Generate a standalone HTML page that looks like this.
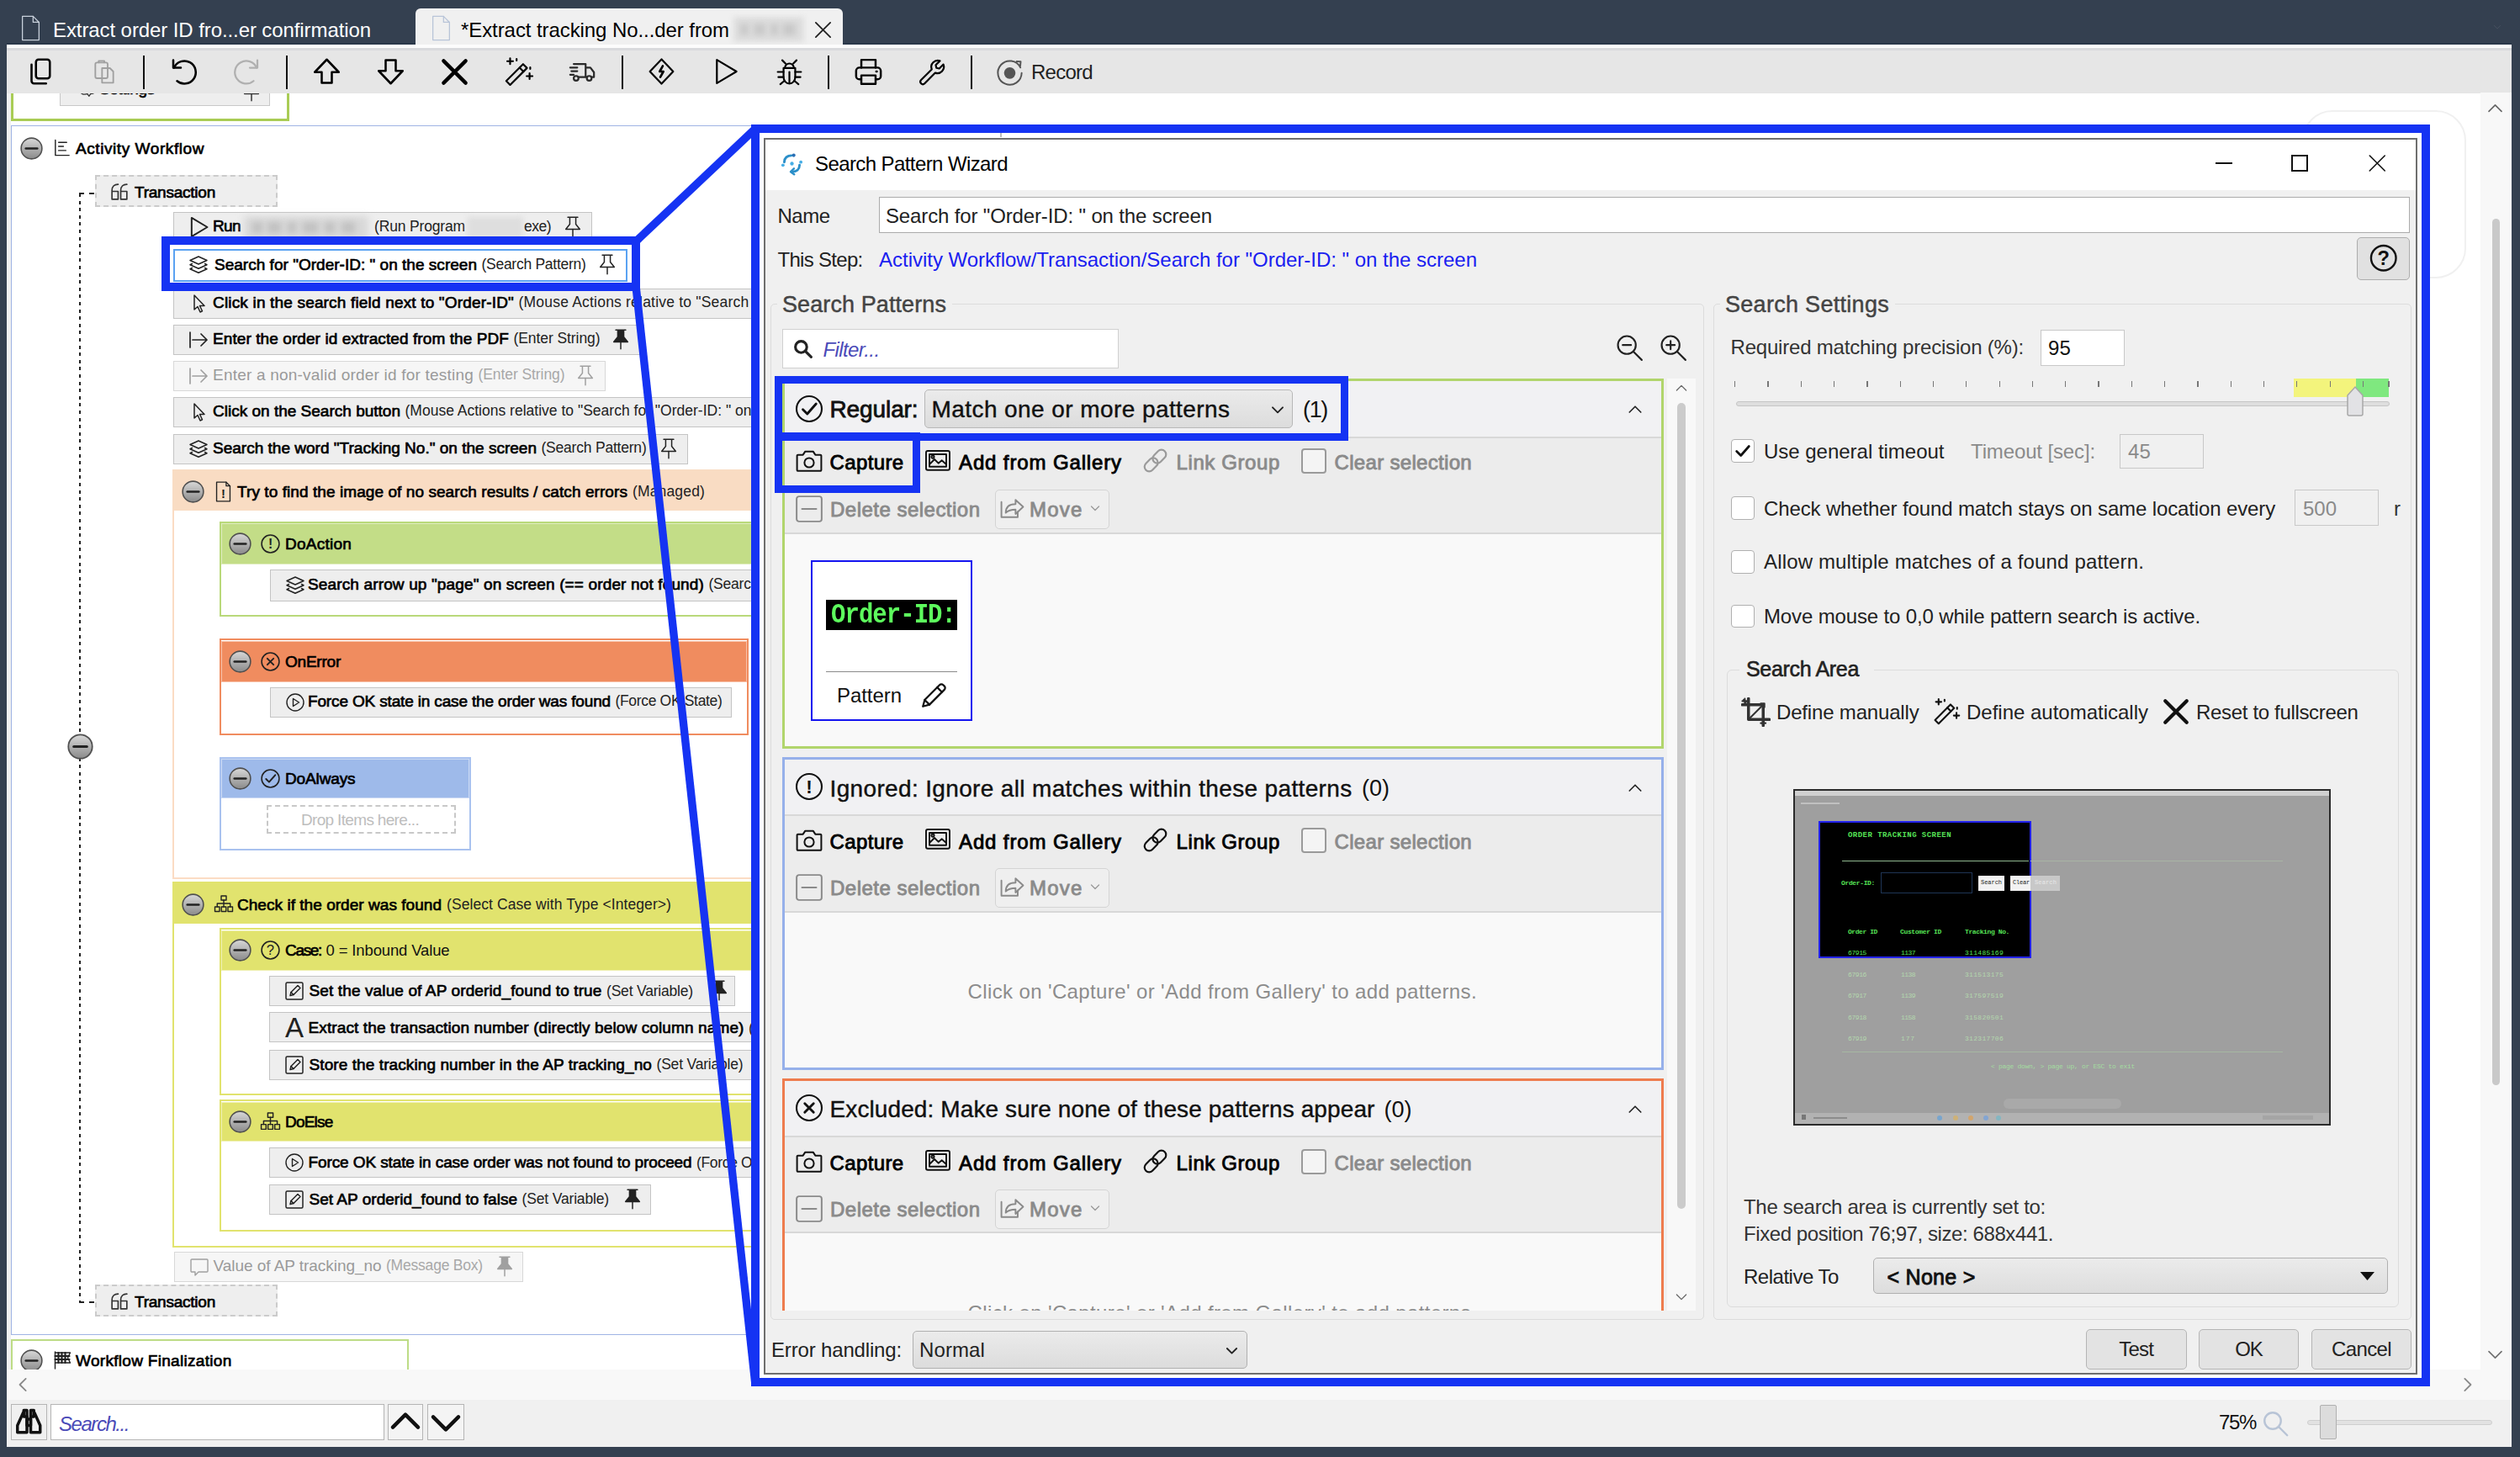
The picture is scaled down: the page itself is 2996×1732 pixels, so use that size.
<!DOCTYPE html>
<html lang="en"><head><meta charset="utf-8"><title>Search Pattern Wizard</title>
<style>
html,body{margin:0;padding:0;background:#344050;}
body{width:2996px;height:1732px;position:relative;overflow:hidden;font-family:"Liberation Sans",sans-serif;}
.b{position:absolute;box-sizing:border-box;display:block;}
.t{position:absolute;white-space:pre;line-height:1;display:block;}
</style></head>
<body>
<div class="b " style="left:0px;top:0px;width:2996px;height:1732px;background:#344050;"></div>
<div class="b " style="left:8px;top:53px;width:2978px;height:1667px;background:#f0f0f0;"></div>
<svg class="b" style="left:24px;top:18px;color:#c9d1dc;" width="25" height="31" viewBox="4 1 16 22" fill="none" stroke="currentColor" stroke-width="0.9" stroke-linecap="round" stroke-linejoin="round"><path d="M5 2h9l5 5v15H5z"/><path d="M14 2v5h5"/></svg>
<span class="t" style="letter-spacing:-0.091px;left:63px;top:23.5px;font-size:24px;color:#fff;">Extract order ID fro...er confirmation</span>
<div class="b " style="left:494px;top:10px;width:508px;height:44px;background:#f0f0f0;border-radius:6px 6px 0 0;"></div>
<svg class="b" style="left:512px;top:18px;color:#b8c4d8;" width="25" height="31" viewBox="4 1 16 22" fill="none" stroke="currentColor" stroke-width="0.9" stroke-linecap="round" stroke-linejoin="round"><path d="M5 2h9l5 5v15H5z"/><path d="M14 2v5h5"/></svg>
<span class="t" style="letter-spacing:-0.079px;left:548px;top:23.5px;font-size:24px;color:#000;">*Extract tracking No...der from</span>
<div class="b " style="left:872px;top:20px;width:84px;height:30px;background:#dedede;filter:blur(3px);"></div>
<div class="b " style="left:880px;top:28px;width:10px;height:14px;background:#c8c8c8;filter:blur(3.500px);"></div>
<div class="b " style="left:896px;top:28px;width:14px;height:14px;background:#c8c8c8;filter:blur(3.500px);"></div>
<div class="b " style="left:916px;top:28px;width:9px;height:14px;background:#c8c8c8;filter:blur(3.500px);"></div>
<div class="b " style="left:930px;top:28px;width:16px;height:14px;background:#c8c8c8;filter:blur(3.500px);"></div>
<svg class="b" style="left:967px;top:24px;color:#222;" width="23" height="23" viewBox="0 0 24 24" fill="none" stroke="currentColor" stroke-width="1.9" stroke-linecap="round" stroke-linejoin="round"><path d="M3 3l18 18M21 3L3 21"/></svg>
<svg class="b" style="left:2962px;top:27px;color:#46505f;" width="14" height="10" viewBox="0 0 24 24" fill="none" stroke="currentColor" stroke-width="2.4" stroke-linecap="round" stroke-linejoin="round"><path d="M3 8l9 9 9-9"/></svg>
<div class="b " style="left:8px;top:50.8px;width:486px;height:2.2px;background:#2a3749;"></div>
<div class="b " style="left:1002px;top:50.8px;width:1984px;height:2.2px;background:#2a3749;"></div>
<div class="b " style="left:8px;top:53px;width:2978px;height:4px;background:#fcfcfc;"></div>
<div class="b " style="left:8px;top:57px;width:2978px;height:2.5px;background:#d9dadd;"></div>
<div class="b " style="left:8px;top:59.5px;width:2978px;height:51.5px;background:#e6e6e6;"></div>
<svg class="b" style="left:30px;top:66px;color:#000;" width="36" height="38" viewBox="0 0 24 24" fill="none" stroke="currentColor" stroke-width="1.7" stroke-linecap="round" stroke-linejoin="round"><rect x="8.5" y="2.5" width="11" height="15" rx="2"/><path d="M5 6.5v13a2 2 0 0 0 2 2h9.5"/></svg>
<svg class="b" style="left:108px;top:67px;color:#a0a0a0;" width="32" height="36" viewBox="0 0 24 24" fill="none" stroke="currentColor" stroke-width="1.4" stroke-linecap="round" stroke-linejoin="round"><rect x="4" y="4" width="11" height="14" rx="1.5"/><path d="M7 4v-1.5h5V4"/><path d="M10 9h7l3 3v10H10z"/></svg>
<svg class="b" style="left:200px;top:67px;color:#000;" width="36" height="36" viewBox="0 0 24 24" fill="none" stroke="currentColor" stroke-width="1.7" stroke-linecap="round" stroke-linejoin="round"><path d="M4 3v6h6"/><path d="M4.6 9A9 9 0 1 1 7 19.5"/></svg>
<svg class="b" style="left:276px;top:67px;color:#b0b0b0;" width="36" height="36" viewBox="0 0 24 24" fill="none" stroke="currentColor" stroke-width="1.5" stroke-linecap="round" stroke-linejoin="round"><path d="M20 3v6h-6"/><path d="M19.4 9A9 9 0 1 0 17 19.5"/></svg>
<svg class="b" style="left:369.5px;top:67px;color:#000;" width="37" height="36" viewBox="0 0 24 24" fill="none" stroke="currentColor" stroke-width="1.7" stroke-linecap="round" stroke-linejoin="round"><path d="M12 2.5l9.5 10h-5.5v8.5h-8V12.5H2.5z"/></svg>
<svg class="b" style="left:445.5px;top:67px;color:#000;" width="37" height="36" viewBox="0 0 24 24" fill="none" stroke="currentColor" stroke-width="1.7" stroke-linecap="round" stroke-linejoin="round"><path d="M12 21.5l9.5-10h-5.5V3h-8v8.5H2.5z"/></svg>
<svg class="b" style="left:522.5px;top:67.5px;color:#000;" width="35" height="35" viewBox="0 0 24 24" fill="none" stroke="currentColor" stroke-width="3" stroke-linecap="round" stroke-linejoin="round"><path d="M3 3l18 18M21 3L3 21"/></svg>
<svg class="b" style="left:597.5px;top:66.5px;color:#000;" width="37" height="37" viewBox="0 0 24 24" fill="none" stroke="currentColor" stroke-width="1.4" stroke-linecap="round" stroke-linejoin="round"><path d="M2.500 19L15.500 6l3 3L5.500 22z"/><path d="M12.800 8.700l3 3"/><path d="M5.500 1.500v4.500M3.250 3.750h4.500M20.500 13v4.500M18.250 15.250h4.500M10.500 2v1.200M21 8.500v1.200"/></svg>
<svg class="b" style="left:673px;top:69px;color:#2a2a2a;" width="38" height="34" viewBox="0 0 24 24" fill="none" stroke="currentColor" stroke-width="1.55" stroke-linecap="round" stroke-linejoin="round"><path d="M5 5h10v11H9M15 8h4l3 4v4h-2M15 16h1"/><circle cx="7" cy="17" r="2"/><circle cx="18" cy="17" r="2"/><path d="M2 8h6M3 11h5M2 14h3"/></svg>
<svg class="b" style="left:768.5px;top:66px;color:#000;" width="35" height="38" viewBox="0 0 24 24" fill="none" stroke="currentColor" stroke-width="1.5" stroke-linecap="round" stroke-linejoin="round"><path d="M12 2l9.5 10-9.5 10L2.5 12z"/><path d="M13 7.5l-2.5 4.5h3L11 16.5" stroke-width="1.8"/></svg>
<svg class="b" style="left:844.5px;top:65px;color:#000;" width="35" height="40" viewBox="0 0 24 24" fill="none" stroke="currentColor" stroke-width="1.5" stroke-linecap="round" stroke-linejoin="round"><path d="M5 2.5l16 9.5-16 9.5z"/></svg>
<svg class="b" style="left:919.5px;top:65.5px;color:#000;" width="37" height="39" viewBox="0 0 24 24" fill="none" stroke="currentColor" stroke-width="1.4" stroke-linecap="round" stroke-linejoin="round"><path d="M7.5 9h9v7a4.5 5 0 0 1-9 0z"/><path d="M8.5 9a3.5 3.5 0 0 1 7 0"/><path d="M12 12v8"/><path d="M7.5 12H3M7.5 16H3.5M16.5 12H21M16.5 16h4M8 19l-3 2.5M16 19l3 2.5M9 5.5L6.5 3M15 5.5L17.5 3"/></svg>
<svg class="b" style="left:1013.5px;top:66px;color:#000;" width="37" height="38" viewBox="0 0 24 24" fill="none" stroke="currentColor" stroke-width="1.6" stroke-linecap="round" stroke-linejoin="round"><path d="M6.5 9V3h11v6"/><rect x="2.5" y="9" width="19" height="9" rx="2.5"/><path d="M6.5 15h11v6.5h-11z" fill="#e6e6e6"/><path d="M18 12h.5"/></svg>
<svg class="b" style="left:1089.5px;top:65.5px;color:#000;" width="37" height="39" viewBox="0 0 24 24" fill="none" stroke="currentColor" stroke-width="1.45" stroke-linecap="round" stroke-linejoin="round"><path d="M20.5 5.2l-3.2 3.2-2.2-.5-.5-2.2 3.2-3.2a5 5 0 0 0-6.3 6.5L3.3 17.2a1.9 1.9 0 0 0 2.7 2.7l8.2-8.2a5 5 0 0 0 6.3-6.5z" transform="translate(0,1)"/></svg>
<svg class="b" style="left:1180.5px;top:66px;color:#555;" width="39" height="40" viewBox="0 0 24 24" fill="none" stroke="currentColor" stroke-width="1.2" stroke-linecap="round" stroke-linejoin="round"><circle cx="12" cy="12.5" r="4.2" fill="currentColor" stroke="none"/><path d="M19.8 8.5A8.7 8.7 0 1 0 20.7 12.5" /><path d="M17 4l3 .2-.3 3" /></svg>
<div class="b " style="left:170.1px;top:66px;width:1.9px;height:40px;background:#111;"></div>
<div class="b " style="left:340.1px;top:66px;width:1.9px;height:40px;background:#111;"></div>
<div class="b " style="left:739.1px;top:66px;width:1.9px;height:40px;background:#111;"></div>
<div class="b " style="left:984.1px;top:66px;width:1.9px;height:40px;background:#111;"></div>
<div class="b " style="left:1154.1px;top:66px;width:1.9px;height:40px;background:#111;"></div>
<span class="t" style="letter-spacing:-0.729px;left:1226px;top:74px;font-size:24px;color:#222;">Record</span>
<div class="b" style="left:13px;top:111px;width:2940px;height:1517px;background:#fff;overflow:hidden">
<div class="b" style="left:-13px;top:-111px;width:2996px;height:1732px">
<div class="b " style="left:13px;top:100px;width:331px;height:44px;border:3px solid #a9cc55;"></div>
<div class="b " style="left:71px;top:100px;width:250px;height:26px;background:#eee;border:1.5px solid #c8c8c8;"></div>
<svg class="b" style="left:93px;top:96px;color:#333;" width="22" height="22" viewBox="0 0 24 24" fill="none" stroke="currentColor" stroke-width="1.4" stroke-linecap="round" stroke-linejoin="round"><circle cx="12" cy="12" r="3.500"/><path d="M12 2l2 3 3.500-.5.500 3.500 3 2-2 3 .500 3.500-3.500.500-2 3-2-3-3.500.500L6 17.500l-3-2 2-3-2-3 3-2L6.500 4 10 5z"/></svg>
<span class="t" style="letter-spacing:-0.332px;left:118px;top:96px;font-size:19px;color:#000;-webkit-text-stroke-width:0.68px;">Settings</span>
<svg class="b" style="left:289px;top:96px;color:#333;" width="20" height="25" viewBox="4 2 16 21" fill="none" stroke="currentColor" stroke-width="1.25" stroke-linecap="round" stroke-linejoin="round"><path d="M7 3h10M9 3v7l-4 5h14l-4-5V3"/><path d="M12 15v7"/></svg>
<div class="b " style="left:13px;top:149px;width:3100px;height:1438px;border:1.5px solid #9fb4e4;"></div>
<svg class="b" style="left:23.5px;top:162.5px;color:#000;" width="27" height="27" viewBox="0 0 24 24" fill="none" stroke="currentColor" stroke-width="1.4" stroke-linecap="round" stroke-linejoin="round"><defs><linearGradient id="mg" x1="0" y1="0" x2="0" y2="1"><stop offset="0" stop-color="#d8d8d8"/><stop offset="1" stop-color="#8a8a8a"/></linearGradient></defs><circle cx="12" cy="12" r="11" fill="url(#mg)" stroke="#505050" stroke-width="1.4"/><path d="M6 12h12" stroke="#222" stroke-width="2.4"/></svg>
<svg class="b" style="left:62px;top:163px;color:#222;" width="23" height="26" viewBox="0 0 24 24" fill="none" stroke="currentColor" stroke-width="1.5" stroke-linecap="round" stroke-linejoin="round"><path d="M4 2v19h17"/><path d="M8 5h10M8 10h6M8 15h9"/></svg>
<span class="t" style="letter-spacing:0.574px;left:90px;top:166.5px;font-size:19px;color:#000;-webkit-text-stroke-width:0.68px;">Activity Workflow</span>
<div class="b" style="left:94.2px;top:230px;width:1.8px;height:1318px;background:repeating-linear-gradient(180deg,#222 0 4px,transparent 4px 8.600px)"></div>
<div class="b" style="left:94px;top:229px;width:18px;height:0;border-top:2px dashed #222"></div>
<div class="b" style="left:94px;top:1547px;width:18px;height:0;border-top:2px dashed #222"></div>
<svg class="b" style="left:79.5px;top:872px;color:#000;" width="31" height="31" viewBox="0 0 24 24" fill="none" stroke="currentColor" stroke-width="1.4" stroke-linecap="round" stroke-linejoin="round"><defs><linearGradient id="mg" x1="0" y1="0" x2="0" y2="1"><stop offset="0" stop-color="#d8d8d8"/><stop offset="1" stop-color="#8a8a8a"/></linearGradient></defs><circle cx="12" cy="12" r="11" fill="url(#mg)" stroke="#505050" stroke-width="1.4"/><path d="M6 12h12" stroke="#222" stroke-width="2.4"/></svg>
<div class="b " style="left:112.5px;top:208px;width:217px;height:38px;background:#eee;border:2px dashed #cbcbcb;"></div>
<svg class="b" style="left:130px;top:215px;color:#333;" width="25" height="25" viewBox="0 0 24 24" fill="none" stroke="currentColor" stroke-width="1.6" stroke-linecap="round" stroke-linejoin="round"><path d="M3 21V11c0-5 3-7 7-7M3 21h7v-9H3"/><path d="M13 21V11c0-5 3-7 7-7M13 21h7v-9h-7"/></svg>
<span class="t" style="letter-spacing:-0.233px;left:160px;top:218.5px;font-size:19px;color:#000;-webkit-text-stroke-width:0.68px;">Transaction</span>
<div class="b " style="left:112.5px;top:1527px;width:217px;height:38px;background:#eee;border:2px dashed #cbcbcb;"></div>
<svg class="b" style="left:130px;top:1534px;color:#333;" width="25" height="25" viewBox="0 0 24 24" fill="none" stroke="currentColor" stroke-width="1.6" stroke-linecap="round" stroke-linejoin="round"><path d="M3 21V11c0-5 3-7 7-7M3 21h7v-9H3"/><path d="M13 21V11c0-5 3-7 7-7M13 21h7v-9h-7"/></svg>
<span class="t" style="letter-spacing:-0.233px;left:160px;top:1537.5px;font-size:19px;color:#000;-webkit-text-stroke-width:0.68px;">Transaction</span>
<div class="b " style="left:206px;top:252px;width:498px;height:36px;background:#eeeeee;border:1.5px solid #c4c4c4;"></div>
<svg class="b" style="left:222px;top:256px;color:#222;" width="28" height="28" viewBox="0 0 24 24" fill="none" stroke="currentColor" stroke-width="1.7" stroke-linecap="round" stroke-linejoin="round"><path d="M5 2.5l16 9.5-16 9.5z"/></svg>
<span class="t" style="letter-spacing:-0.620px;left:253px;top:258.8px;font-size:19px;color:#000;-webkit-text-stroke-width:0.68px;">Run</span>
<div class="b " style="left:290px;top:257px;width:148px;height:27px;background:#d8d8d8;filter:blur(4px);"></div>
<div class="b " style="left:300px;top:264px;width:12px;height:13px;background:#c2c2c2;filter:blur(3.500px);"></div>
<div class="b " style="left:318px;top:264px;width:16px;height:13px;background:#c2c2c2;filter:blur(3.500px);"></div>
<div class="b " style="left:342px;top:264px;width:10px;height:13px;background:#c2c2c2;filter:blur(3.500px);"></div>
<div class="b " style="left:360px;top:264px;width:18px;height:13px;background:#c2c2c2;filter:blur(3.500px);"></div>
<div class="b " style="left:386px;top:264px;width:12px;height:13px;background:#c2c2c2;filter:blur(3.500px);"></div>
<div class="b " style="left:406px;top:264px;width:16px;height:13px;background:#c2c2c2;filter:blur(3.500px);"></div>
<span class="t" style="letter-spacing:-0.159px;left:445px;top:260.75px;font-size:17.5px;color:#222;">(Run Program</span>
<div class="b " style="left:556px;top:258px;width:66px;height:25px;background:#dedede;filter:blur(3px);"></div>
<span class="t" style="letter-spacing:-0.512px;left:623px;top:260.75px;font-size:17.5px;color:#222;">exe)</span>
<svg class="b" style="left:671px;top:257px;color:#222;" width="20" height="25" viewBox="4 2 16 21" fill="none" stroke="currentColor" stroke-width="1.25" stroke-linecap="round" stroke-linejoin="round"><path d="M7 3h10M9 3v7l-4 5h14l-4-5V3"/><path d="M12 15v7"/></svg>
<div class="b " style="left:206px;top:296px;width:540px;height:39px;background:#fff;border:2.5px solid #5aa2f2;"></div>
<svg class="b" style="left:224px;top:303px;color:#222;" width="24" height="24" viewBox="0 0 24 24" fill="none" stroke="currentColor" stroke-width="1.5" stroke-linecap="round" stroke-linejoin="round"><path d="M12 2l10 4.5-10 4.5L2 6.500z"/><path d="M4.500 10.500L2 11.700l10 4.500 10-4.500-2.500-1.200"/><path d="M4.500 15.500L2 16.700l10 4.500 10-4.500-2.500-1.200"/></svg>
<span class="t" style="letter-spacing:0.019px;left:255px;top:304.8px;font-size:19px;color:#000;-webkit-text-stroke-width:0.68px;">Search for "Order-ID: " on the screen</span>
<span class="t" style="letter-spacing:-0.274px;left:572.5px;top:306.05px;font-size:17.5px;color:#222;">(Search Pattern)</span>
<svg class="b" style="left:712px;top:302px;color:#222;" width="20" height="25" viewBox="4 2 16 21" fill="none" stroke="currentColor" stroke-width="1.25" stroke-linecap="round" stroke-linejoin="round"><path d="M7 3h10M9 3v7l-4 5h14l-4-5V3"/><path d="M12 15v7"/></svg>
<div class="b " style="left:206px;top:343px;width:800px;height:36px;background:#eeeeee;border:1.5px solid #c4c4c4;"></div>
<svg class="b" style="left:224px;top:349px;color:#222;" width="24" height="24" viewBox="0 0 24 24" fill="none" stroke="currentColor" stroke-width="1.5" stroke-linecap="round" stroke-linejoin="round"><path d="M7 2v17l4-3.5 3 6.500 2.500-1.200-3-6.300h5.500z"/></svg>
<span class="t" style="letter-spacing:0.174px;left:253px;top:349.8px;font-size:19px;color:#000;-webkit-text-stroke-width:0.68px;">Click in the search field next to "Order-ID"</span>
<span class="t" style="letter-spacing:0.206px;left:616.5px;top:351.05px;font-size:17.5px;color:#222;">(Mouse Actions relative to "Search for</span>
<div class="b " style="left:206px;top:386px;width:560px;height:36px;background:#eeeeee;border:1.5px solid #c4c4c4;"></div>
<svg class="b" style="left:224px;top:392px;color:#222;" width="24" height="24" viewBox="0 0 24 24" fill="none" stroke="currentColor" stroke-width="1.7" stroke-linecap="round" stroke-linejoin="round"><path d="M2 3v18"/><path d="M5 12h17M15 5l7 7-7 7"/></svg>
<span class="t" style="letter-spacing:0.085px;left:253px;top:392.8px;font-size:19px;color:#000;-webkit-text-stroke-width:0.68px;">Enter the order id extracted from the PDF</span>
<span class="t" style="letter-spacing:-0.076px;left:610.5px;top:394.05px;font-size:17.5px;color:#222;">(Enter String)</span>
<svg class="b" style="left:728px;top:391px;color:#222;" width="20" height="25" viewBox="4 2 16 21" fill="none" stroke="currentColor" stroke-width="1.25" stroke-linecap="round" stroke-linejoin="round"><path d="M7 3h10M9 3v7l-4 5h14l-4-5V3z" fill="currentColor"/><path d="M12 15v7"/></svg>
<div class="b " style="left:206px;top:429px;width:514px;height:36px;background:#f6f6f6;border:1.5px solid #d8d8d8;"></div>
<svg class="b" style="left:224px;top:435px;color:#a0a0a0;" width="24" height="24" viewBox="0 0 24 24" fill="none" stroke="currentColor" stroke-width="1.7" stroke-linecap="round" stroke-linejoin="round"><path d="M2 3v18"/><path d="M5 12h17M15 5l7 7-7 7"/></svg>
<span class="t" style="letter-spacing:0.209px;left:253px;top:435.8px;font-size:19px;color:#9a9a9a;">Enter a non-valid order id for testing</span>
<span class="t" style="letter-spacing:-0.076px;left:568.5px;top:437.05px;font-size:17.5px;color:#a8a8a8;">(Enter String)</span>
<svg class="b" style="left:686px;top:434px;color:#a0a0a0;" width="20" height="25" viewBox="4 2 16 21" fill="none" stroke="currentColor" stroke-width="1.25" stroke-linecap="round" stroke-linejoin="round"><path d="M7 3h10M9 3v7l-4 5h14l-4-5V3"/><path d="M12 15v7"/></svg>
<div class="b " style="left:206px;top:472px;width:800px;height:36px;background:#eeeeee;border:1.5px solid #c4c4c4;"></div>
<svg class="b" style="left:224px;top:478px;color:#222;" width="24" height="24" viewBox="0 0 24 24" fill="none" stroke="currentColor" stroke-width="1.5" stroke-linecap="round" stroke-linejoin="round"><path d="M7 2v17l4-3.5 3 6.500 2.500-1.200-3-6.300h5.500z"/></svg>
<span class="t" style="letter-spacing:0.005px;left:253px;top:478.8px;font-size:19px;color:#000;-webkit-text-stroke-width:0.68px;">Click on the Search button</span>
<span class="t" style="letter-spacing:0.008px;left:481.5px;top:480.05px;font-size:17.5px;color:#222;">(Mouse Actions relative to "Search for "Order-ID: " on</span>
<div class="b " style="left:206px;top:516px;width:612px;height:36px;background:#eeeeee;border:1.5px solid #c4c4c4;"></div>
<svg class="b" style="left:224px;top:522px;color:#222;" width="24" height="24" viewBox="0 0 24 24" fill="none" stroke="currentColor" stroke-width="1.5" stroke-linecap="round" stroke-linejoin="round"><path d="M12 2l10 4.5-10 4.5L2 6.500z"/><path d="M4.500 10.500L2 11.700l10 4.500 10-4.500-2.500-1.200"/><path d="M4.500 15.500L2 16.700l10 4.500 10-4.500-2.500-1.200"/></svg>
<span class="t" style="letter-spacing:0.011px;left:253px;top:522.8px;font-size:19px;color:#000;-webkit-text-stroke-width:0.68px;">Search the word "Tracking No." on the screen</span>
<span class="t" style="letter-spacing:-0.212px;left:643.5px;top:524.05px;font-size:17.5px;color:#222;">(Search Pattern)</span>
<svg class="b" style="left:785px;top:521px;color:#222;" width="20" height="25" viewBox="4 2 16 21" fill="none" stroke="currentColor" stroke-width="1.25" stroke-linecap="round" stroke-linejoin="round"><path d="M7 3h10M9 3v7l-4 5h14l-4-5V3"/><path d="M12 15v7"/></svg>
<div class="b " style="left:205px;top:558px;width:760px;height:487px;border:2px solid #fbdcc4;"></div>
<div class="b " style="left:205px;top:558px;width:760px;height:49px;background:#f9dcc3;"></div>
<svg class="b" style="left:215.5px;top:571px;color:#000;" width="27" height="27" viewBox="0 0 24 24" fill="none" stroke="currentColor" stroke-width="1.4" stroke-linecap="round" stroke-linejoin="round"><defs><linearGradient id="mg" x1="0" y1="0" x2="0" y2="1"><stop offset="0" stop-color="#d8d8d8"/><stop offset="1" stop-color="#8a8a8a"/></linearGradient></defs><circle cx="12" cy="12" r="11" fill="url(#mg)" stroke="#505050" stroke-width="1.4"/><path d="M6 12h12" stroke="#222" stroke-width="2.4"/></svg>
<svg class="b" style="left:256px;top:572px;color:#222;" width="19" height="25" viewBox="4 1 16 22" fill="none" stroke="currentColor" stroke-width="1.2" stroke-linecap="round" stroke-linejoin="round"><path d="M5 2h10l4 4v16H5z"/><path d="M15 2v4h4"/><text x="12" y="19" text-anchor="middle" font-size="13" font-family="Liberation Sans, sans-serif" fill="currentColor" stroke="none" font-weight="bold">!</text></svg>
<span class="t" style="letter-spacing:0.075px;left:282px;top:575px;font-size:19px;color:#000;-webkit-text-stroke-width:0.68px;">Try to find the image of no search results / catch errors</span>
<span class="t" style="letter-spacing:0.151px;left:752px;top:576.25px;font-size:17.5px;color:#222;">(Managed)</span>
<div class="b " style="left:260.5px;top:619.5px;width:720px;height:113.5px;background:#fff;border:2.5px solid #b9d97a;"></div>
<div class="b " style="left:263px;top:622px;width:715px;height:49px;background:#c3dd87;border:1.5px solid rgba(255,255,255,0.45);"></div>
<svg class="b" style="left:271.5px;top:633px;color:#000;" width="27" height="27" viewBox="0 0 24 24" fill="none" stroke="currentColor" stroke-width="1.4" stroke-linecap="round" stroke-linejoin="round"><defs><linearGradient id="mg" x1="0" y1="0" x2="0" y2="1"><stop offset="0" stop-color="#d8d8d8"/><stop offset="1" stop-color="#8a8a8a"/></linearGradient></defs><circle cx="12" cy="12" r="11" fill="url(#mg)" stroke="#505050" stroke-width="1.4"/><path d="M6 12h12" stroke="#222" stroke-width="2.4"/></svg>
<svg class="b" style="left:309px;top:634px;color:#222;" width="25" height="25" viewBox="0 0 24 24" fill="none" stroke="currentColor" stroke-width="1.5" stroke-linecap="round" stroke-linejoin="round"><circle cx="12" cy="12" r="10"/><text x="12" y="17.3" text-anchor="middle" font-size="15" font-family="Liberation Sans, sans-serif" fill="currentColor" stroke="none" font-weight="bold">!</text></svg>
<span class="t" style="letter-spacing:0.236px;left:339px;top:637px;font-size:19px;color:#000;-webkit-text-stroke-width:0.68px;">DoAction</span>
<div class="b " style="left:320.5px;top:677px;width:640px;height:38px;background:#eeeeee;border:1.5px solid #c4c4c4;"></div>
<svg class="b" style="left:338.5px;top:684px;color:#222;" width="24" height="24" viewBox="0 0 24 24" fill="none" stroke="currentColor" stroke-width="1.5" stroke-linecap="round" stroke-linejoin="round"><path d="M12 2l10 4.5-10 4.5L2 6.500z"/><path d="M4.500 10.500L2 11.700l10 4.500 10-4.500-2.500-1.200"/><path d="M4.500 15.500L2 16.700l10 4.500 10-4.500-2.500-1.200"/></svg>
<span class="t" style="letter-spacing:0.143px;left:366px;top:684.8px;font-size:19px;color:#000;-webkit-text-stroke-width:0.68px;">Search arrow up "page" on screen (== order not found)</span>
<span class="t" style="letter-spacing:-0.212px;left:842.5px;top:686.05px;font-size:17.5px;color:#222;">(Search Pattern)</span>
<div class="b " style="left:260.5px;top:759px;width:629.5px;height:114.5px;background:#fff;border:2.5px solid #f08c5f;"></div>
<div class="b " style="left:263px;top:761.5px;width:624.5px;height:49px;background:#f08c5f;border:1.5px solid rgba(255,255,255,0.45);"></div>
<svg class="b" style="left:271.5px;top:772.5px;color:#000;" width="27" height="27" viewBox="0 0 24 24" fill="none" stroke="currentColor" stroke-width="1.4" stroke-linecap="round" stroke-linejoin="round"><defs><linearGradient id="mg" x1="0" y1="0" x2="0" y2="1"><stop offset="0" stop-color="#d8d8d8"/><stop offset="1" stop-color="#8a8a8a"/></linearGradient></defs><circle cx="12" cy="12" r="11" fill="url(#mg)" stroke="#505050" stroke-width="1.4"/><path d="M6 12h12" stroke="#222" stroke-width="2.4"/></svg>
<svg class="b" style="left:309px;top:773.5px;color:#222;" width="25" height="25" viewBox="0 0 24 24" fill="none" stroke="currentColor" stroke-width="1.5" stroke-linecap="round" stroke-linejoin="round"><circle cx="12" cy="12" r="10"/><path d="M8.500 8.500l7 7M15.500 8.500l-7 7" stroke-width="1.9"/></svg>
<span class="t" style="letter-spacing:-0.225px;left:339px;top:776.5px;font-size:19px;color:#000;-webkit-text-stroke-width:0.68px;">OnError</span>
<div class="b " style="left:320.5px;top:817px;width:549.5px;height:36px;background:#eeeeee;border:1.5px solid #c4c4c4;"></div>
<svg class="b" style="left:338.5px;top:823px;color:#222;" width="24" height="24" viewBox="0 0 24 24" fill="none" stroke="currentColor" stroke-width="1.4" stroke-linecap="round" stroke-linejoin="round"><circle cx="12" cy="12" r="10"/><path d="M9.500 7.500l7 4.500-7 4.500z"/></svg>
<span class="t" style="letter-spacing:-0.154px;left:366px;top:823.8px;font-size:19px;color:#000;-webkit-text-stroke-width:0.68px;">Force OK state in case the order was found</span>
<span class="t" style="letter-spacing:-0.329px;left:731.5px;top:825.05px;font-size:17.5px;color:#222;">(Force OK State)</span>
<div class="b " style="left:260.5px;top:899.5px;width:299.5px;height:111.5px;background:#fff;border:2.5px solid #a9c2ef;"></div>
<div class="b " style="left:263px;top:902px;width:294.5px;height:46.5px;background:#9ebaea;border:1.5px solid rgba(255,255,255,0.45);"></div>
<svg class="b" style="left:271.5px;top:911.75px;color:#000;" width="27" height="27" viewBox="0 0 24 24" fill="none" stroke="currentColor" stroke-width="1.4" stroke-linecap="round" stroke-linejoin="round"><defs><linearGradient id="mg" x1="0" y1="0" x2="0" y2="1"><stop offset="0" stop-color="#d8d8d8"/><stop offset="1" stop-color="#8a8a8a"/></linearGradient></defs><circle cx="12" cy="12" r="11" fill="url(#mg)" stroke="#505050" stroke-width="1.4"/><path d="M6 12h12" stroke="#222" stroke-width="2.4"/></svg>
<svg class="b" style="left:309px;top:912.75px;color:#222;" width="25" height="25" viewBox="0 0 24 24" fill="none" stroke="currentColor" stroke-width="1.5" stroke-linecap="round" stroke-linejoin="round"><circle cx="12" cy="12" r="10"/><path d="M7 12.500l3.500 3.500 7-8" stroke-width="1.9"/></svg>
<span class="t" style="letter-spacing:-0.123px;left:339px;top:915.75px;font-size:19px;color:#000;-webkit-text-stroke-width:0.68px;">DoAlways</span>
<div class="b " style="left:317px;top:957px;width:225px;height:33.5px;border:2px dashed #c8c8c8;"></div>
<span class="t" style="letter-spacing:-0.670px;left:358px;top:964.5px;font-size:19px;color:#bdbdbd;">Drop Items here...</span>
<div class="b " style="left:205px;top:1047.5px;width:760px;height:435px;background:#fff;border:2.5px solid #e1e36e;"></div>
<div class="b " style="left:205px;top:1047.5px;width:760px;height:50.5px;background:#e1e36e;"></div>
<svg class="b" style="left:215.5px;top:1061.5px;color:#000;" width="27" height="27" viewBox="0 0 24 24" fill="none" stroke="currentColor" stroke-width="1.4" stroke-linecap="round" stroke-linejoin="round"><defs><linearGradient id="mg" x1="0" y1="0" x2="0" y2="1"><stop offset="0" stop-color="#d8d8d8"/><stop offset="1" stop-color="#8a8a8a"/></linearGradient></defs><circle cx="12" cy="12" r="11" fill="url(#mg)" stroke="#505050" stroke-width="1.4"/><path d="M6 12h12" stroke="#222" stroke-width="2.4"/></svg>
<svg class="b" style="left:254px;top:1063px;color:#222;" width="24" height="24" viewBox="0 0 24 24" fill="none" stroke="currentColor" stroke-width="1.4" stroke-linecap="round" stroke-linejoin="round"><rect x="9" y="2" width="6" height="5"/><rect x="1.500" y="15" width="5.500" height="5.500"/><rect x="9.250" y="15" width="5.500" height="5.500"/><rect x="17" y="15" width="5.500" height="5.500"/><path d="M12 7v8M4.250 15v-4h15.500v4"/></svg>
<span class="t" style="letter-spacing:0.041px;left:282px;top:1065.5px;font-size:19px;color:#000;-webkit-text-stroke-width:0.68px;">Check if the order was found</span>
<span class="t" style="letter-spacing:0.083px;left:531px;top:1066.75px;font-size:17.5px;color:#222;">(Select Case with Type &lt;Integer&gt;)</span>
<div class="b " style="left:260.5px;top:1103px;width:720px;height:199px;background:#fff;border:2.5px solid #e1e36e;"></div>
<div class="b " style="left:263px;top:1105.5px;width:715px;height:48px;background:#e1e36e;border:1.5px solid rgba(255,255,255,0.45);"></div>
<svg class="b" style="left:271.5px;top:1116px;color:#000;" width="27" height="27" viewBox="0 0 24 24" fill="none" stroke="currentColor" stroke-width="1.4" stroke-linecap="round" stroke-linejoin="round"><defs><linearGradient id="mg" x1="0" y1="0" x2="0" y2="1"><stop offset="0" stop-color="#d8d8d8"/><stop offset="1" stop-color="#8a8a8a"/></linearGradient></defs><circle cx="12" cy="12" r="11" fill="url(#mg)" stroke="#505050" stroke-width="1.4"/><path d="M6 12h12" stroke="#222" stroke-width="2.4"/></svg>
<svg class="b" style="left:309px;top:1117px;color:#222;" width="25" height="25" viewBox="0 0 24 24" fill="none" stroke="currentColor" stroke-width="1.5" stroke-linecap="round" stroke-linejoin="round"><circle cx="12" cy="12" r="10"/><text x="12" y="17.600" text-anchor="middle" font-size="16" font-family="Liberation Sans, sans-serif" fill="currentColor" stroke="none" >?</text></svg>
<span class="t" style="letter-spacing:-1.328px;left:339px;top:1120px;font-size:19px;color:#000;-webkit-text-stroke-width:0.68px;">Case:</span>
<span class="t" style="letter-spacing:-0.137px;left:387.5px;top:1121.25px;font-size:18.5px;color:#111;">0 = Inbound Value</span>
<div class="b " style="left:320px;top:1159.5px;width:553.5px;height:36px;background:#eeeeee;border:1.5px solid #c4c4c4;"></div>
<svg class="b" style="left:338px;top:1165.5px;color:#222;" width="24" height="24" viewBox="0 0 24 24" fill="none" stroke="currentColor" stroke-width="1.5" stroke-linecap="round" stroke-linejoin="round"><rect x="2" y="2" width="20" height="20" rx="1.500"/><path d="M7 17.500l1-4 8-8 3 3-8 8z"/><path d="M8 13.500l3 3"/></svg>
<span class="t" style="letter-spacing:0.123px;left:367.5px;top:1168.3px;font-size:19px;color:#000;-webkit-text-stroke-width:0.68px;">Set the value of AP orderid_found to true</span>
<span class="t" style="letter-spacing:-0.193px;left:721px;top:1169.55px;font-size:17.5px;color:#222;">(Set Variable)</span>
<svg class="b" style="left:845px;top:1164.5px;color:#222;" width="20" height="25" viewBox="4 2 16 21" fill="none" stroke="currentColor" stroke-width="1.25" stroke-linecap="round" stroke-linejoin="round"><path d="M7 3h10M9 3v7l-4 5h14l-4-5V3z" fill="currentColor"/><path d="M12 15v7"/></svg>
<div class="b " style="left:320px;top:1203px;width:700px;height:36px;background:#eeeeee;border:1.5px solid #c4c4c4;"></div>
<svg class="b" style="left:338px;top:1209px;color:#222;" width="24" height="24" viewBox="0 0 24 24" fill="none" stroke="currentColor" stroke-width="0" stroke-linecap="round" stroke-linejoin="round"><text x="12" y="23.500" text-anchor="middle" font-size="33" font-family="Liberation Sans, sans-serif" fill="currentColor" stroke="none" >A</text></svg>
<span class="t" style="letter-spacing:0.117px;left:366.5px;top:1212.3px;font-size:19px;color:#000;-webkit-text-stroke-width:0.68px;">Extract the transaction number (directly below column name)</span>
<span class="t" style="letter-spacing:-0.037px;left:890px;top:1213.55px;font-size:17.5px;color:#222;">(Extract</span>
<div class="b " style="left:320px;top:1247.5px;width:700px;height:36px;background:#eeeeee;border:1.5px solid #c4c4c4;"></div>
<svg class="b" style="left:338px;top:1253.5px;color:#222;" width="24" height="24" viewBox="0 0 24 24" fill="none" stroke="currentColor" stroke-width="1.5" stroke-linecap="round" stroke-linejoin="round"><rect x="2" y="2" width="20" height="20" rx="1.500"/><path d="M7 17.500l1-4 8-8 3 3-8 8z"/><path d="M8 13.500l3 3"/></svg>
<span class="t" style="letter-spacing:0.093px;left:367.5px;top:1255.5px;font-size:19px;color:#000;-webkit-text-stroke-width:0.68px;">Store the tracking number in the AP tracking_no</span>
<span class="t" style="letter-spacing:-0.193px;left:780.5px;top:1256.75px;font-size:17.5px;color:#222;">(Set Variable)</span>
<svg class="b" style="left:905px;top:1252.5px;color:#222;" width="20" height="25" viewBox="4 2 16 21" fill="none" stroke="currentColor" stroke-width="1.25" stroke-linecap="round" stroke-linejoin="round"><path d="M7 3h10M9 3v7l-4 5h14l-4-5V3z" fill="currentColor"/><path d="M12 15v7"/></svg>
<div class="b " style="left:260.5px;top:1307px;width:720px;height:157px;background:#fff;border:2.5px solid #e1e36e;"></div>
<div class="b " style="left:263px;top:1309.5px;width:715px;height:47.5px;background:#e1e36e;border:1.5px solid rgba(255,255,255,0.45);"></div>
<svg class="b" style="left:271.5px;top:1319.75px;color:#000;" width="27" height="27" viewBox="0 0 24 24" fill="none" stroke="currentColor" stroke-width="1.4" stroke-linecap="round" stroke-linejoin="round"><defs><linearGradient id="mg" x1="0" y1="0" x2="0" y2="1"><stop offset="0" stop-color="#d8d8d8"/><stop offset="1" stop-color="#8a8a8a"/></linearGradient></defs><circle cx="12" cy="12" r="11" fill="url(#mg)" stroke="#505050" stroke-width="1.4"/><path d="M6 12h12" stroke="#222" stroke-width="2.4"/></svg>
<svg class="b" style="left:309px;top:1320.75px;color:#222;" width="25" height="25" viewBox="0 0 24 24" fill="none" stroke="currentColor" stroke-width="1.4" stroke-linecap="round" stroke-linejoin="round"><rect x="9" y="2" width="6" height="5"/><rect x="1.500" y="15" width="5.500" height="5.500"/><rect x="9.250" y="15" width="5.500" height="5.500"/><rect x="17" y="15" width="5.500" height="5.500"/><path d="M12 7v8M4.250 15v-4h15.500v4"/></svg>
<span class="t" style="letter-spacing:-0.792px;left:339px;top:1323.75px;font-size:19px;color:#000;-webkit-text-stroke-width:0.68px;">DoElse</span>
<div class="b " style="left:320px;top:1363.5px;width:700px;height:36px;background:#eeeeee;border:1.5px solid #c4c4c4;"></div>
<svg class="b" style="left:338px;top:1369.5px;color:#222;" width="24" height="24" viewBox="0 0 24 24" fill="none" stroke="currentColor" stroke-width="1.4" stroke-linecap="round" stroke-linejoin="round"><circle cx="12" cy="12" r="10"/><path d="M9.500 7.500l7 4.500-7 4.500z"/></svg>
<span class="t" style="letter-spacing:-0.104px;left:366.5px;top:1372.3px;font-size:19px;color:#000;-webkit-text-stroke-width:0.68px;">Force OK state in case order was not found to proceed</span>
<span class="t" style="letter-spacing:-0.329px;left:828px;top:1373.55px;font-size:17.5px;color:#222;">(Force OK State)</span>
<div class="b " style="left:320px;top:1408px;width:454px;height:36px;background:#eeeeee;border:1.5px solid #c4c4c4;"></div>
<svg class="b" style="left:338px;top:1414px;color:#222;" width="24" height="24" viewBox="0 0 24 24" fill="none" stroke="currentColor" stroke-width="1.5" stroke-linecap="round" stroke-linejoin="round"><rect x="2" y="2" width="20" height="20" rx="1.500"/><path d="M7 17.500l1-4 8-8 3 3-8 8z"/><path d="M8 13.500l3 3"/></svg>
<span class="t" style="letter-spacing:0.023px;left:367.5px;top:1416.2px;font-size:19px;color:#000;-webkit-text-stroke-width:0.68px;">Set AP orderid_found to false</span>
<span class="t" style="letter-spacing:-0.157px;left:620.5px;top:1417.45px;font-size:17.5px;color:#222;">(Set Variable)</span>
<svg class="b" style="left:741.5px;top:1413px;color:#222;" width="20" height="25" viewBox="4 2 16 21" fill="none" stroke="currentColor" stroke-width="1.25" stroke-linecap="round" stroke-linejoin="round"><path d="M7 3h10M9 3v7l-4 5h14l-4-5V3z" fill="currentColor"/><path d="M12 15v7"/></svg>
<div class="b " style="left:207px;top:1487.5px;width:414.5px;height:36px;background:#f6f6f6;border:1.5px solid #d8d8d8;"></div>
<svg class="b" style="left:225px;top:1493.5px;color:#a0a0a0;" width="24" height="24" viewBox="0 0 24 24" fill="none" stroke="currentColor" stroke-width="1.4" stroke-linecap="round" stroke-linejoin="round"><path d="M3 3h18a1 1 0 0 1 1 1v13a1 1 0 0 1-1 1H11l-4 4v-4H3a1 1 0 0 1-1-1V4a1 1 0 0 1 1-1z"/></svg>
<span class="t" style="letter-spacing:-0.046px;left:253.5px;top:1494.8px;font-size:19px;color:#9a9a9a;">Value of AP tracking_no</span>
<span class="t" style="letter-spacing:-0.207px;left:459px;top:1496.05px;font-size:17.5px;color:#a8a8a8;">(Message Box)</span>
<svg class="b" style="left:590px;top:1492.5px;color:#a0a0a0;" width="20" height="25" viewBox="4 2 16 21" fill="none" stroke="currentColor" stroke-width="1.25" stroke-linecap="round" stroke-linejoin="round"><path d="M7 3h10M9 3v7l-4 5h14l-4-5V3z" fill="currentColor"/><path d="M12 15v7"/></svg>
<div class="b " style="left:13px;top:1591.5px;width:473px;height:60px;border:2.500px solid #bddc86;"></div>
<svg class="b" style="left:23.5px;top:1604px;color:#000;" width="27" height="27" viewBox="0 0 24 24" fill="none" stroke="currentColor" stroke-width="1.4" stroke-linecap="round" stroke-linejoin="round"><defs><linearGradient id="mg" x1="0" y1="0" x2="0" y2="1"><stop offset="0" stop-color="#d8d8d8"/><stop offset="1" stop-color="#8a8a8a"/></linearGradient></defs><circle cx="12" cy="12" r="11" fill="url(#mg)" stroke="#505050" stroke-width="1.4"/><path d="M6 12h12" stroke="#222" stroke-width="2.4"/></svg>
<svg class="b" style="left:62px;top:1605px;color:#222;" width="25" height="24" viewBox="0 0 24 24" fill="none" stroke="currentColor" stroke-width="1.4" stroke-linecap="round" stroke-linejoin="round"><path d="M3 2v20"/><path d="M3 3h18l-3 6 3 6H3"/><path d="M7 3v12M11 3v12M15 3v12M3 7h17M3 11h17" stroke-width="2.2"/></svg>
<span class="t" style="letter-spacing:0.302px;left:90px;top:1608px;font-size:19px;color:#000;-webkit-text-stroke-width:0.68px;">Workflow Finalization</span>
<div class="b " style="left:2889px;top:110px;width:70px;height:1520px;background:#fff;"></div>
<div class="b " style="left:2737px;top:131px;width:195px;height:200px;border:2.500px solid #f0f0f0;border-radius:36px;"></div>
</div></div>
<div class="b " style="left:2949px;top:110px;width:37px;height:1518px;background:#f8f8f8;"></div>
<svg class="b" style="left:2953px;top:118.5px;color:#666;" width="27" height="20" viewBox="0 0 24 24" fill="none" stroke="currentColor" stroke-width="2" stroke-linecap="round" stroke-linejoin="round"><path d="M3 16l9-9 9 9"/></svg>
<svg class="b" style="left:2952.5px;top:1600px;color:#707070;" width="27" height="20" viewBox="0 0 24 24" fill="none" stroke="currentColor" stroke-width="2" stroke-linecap="round" stroke-linejoin="round"><path d="M3 8l9 9 9-9"/></svg>
<div class="b " style="left:2962.5px;top:260px;width:9.5px;height:1030px;background:#c9c9c9;border-radius:5px;"></div>
<div class="b " style="left:8px;top:1628px;width:2978px;height:36px;background:#f8f8f8;"></div>
<svg class="b" style="left:17.5px;top:1633px;color:#8a8a8a;" width="19" height="26" viewBox="0 0 24 24" fill="none" stroke="currentColor" stroke-width="2.3" stroke-linecap="round" stroke-linejoin="round"><path d="M16 3l-9 9 9 9"/></svg>
<svg class="b" style="left:2923.5px;top:1633px;color:#8a8a8a;" width="19" height="26" viewBox="0 0 24 24" fill="none" stroke="currentColor" stroke-width="2.3" stroke-linecap="round" stroke-linejoin="round"><path d="M8 3l9 9-9 9"/></svg>
<div class="b " style="left:8px;top:1664px;width:2978px;height:56px;background:#f0f0f0;"></div>
<div class="b " style="left:13px;top:1669px;width:42.5px;height:42.5px;background:#f0f0f0;border:1.5px solid #b5b5b5;"></div>
<svg class="b" style="left:15px;top:1672px;color:#111;" width="38.5" height="36" viewBox="0 0 24 24" fill="none" stroke="currentColor" stroke-width="2.3" stroke-linecap="round" stroke-linejoin="round"><path d="M8 3h2.500v5H8zM13.500 3H16v5h-2.500z"/><path d="M7.500 5L3 15v5.500h7.500V8M16.500 5l4.500 10v5.500h-7.500V8"/><path d="M10.500 10h3v5h-3z"/></svg>
<div class="b " style="left:59.5px;top:1669px;width:397px;height:42.5px;background:#fff;border:1.5px solid #b5b5b5;"></div>
<span class="t" style="letter-spacing:-1.450px;left:70px;top:1680.5px;font-size:24px;color:#4a4ab8;font-style:italic;">Search...</span>
<div class="b " style="left:460.5px;top:1669px;width:42.5px;height:42.5px;background:#f4f4f4;border:1.5px solid #b5b5b5;"></div>
<div class="b " style="left:508px;top:1669px;width:43.5px;height:42.5px;background:#f4f4f4;border:1.5px solid #b5b5b5;"></div>
<svg class="b" style="left:460px;top:1670px;color:#111;" width="44" height="40" viewBox="0 0 24 24" fill="none" stroke="currentColor" stroke-width="2.7" stroke-linecap="round" stroke-linejoin="round"><path d="M3 16l9-9 9 9"/></svg>
<svg class="b" style="left:507.5px;top:1671px;color:#111;" width="44" height="40" viewBox="0 0 24 24" fill="none" stroke="currentColor" stroke-width="2.7" stroke-linecap="round" stroke-linejoin="round"><path d="M3 8l9 9 9-9"/></svg>
<span class="t" style="letter-spacing:-1.349px;left:2638px;top:1679px;font-size:24px;color:#111;">75%</span>
<svg class="b" style="left:2687px;top:1674px;color:#b8c4d6;" width="36" height="36" viewBox="0 0 24 24" fill="none" stroke="currentColor" stroke-width="1.6" stroke-linecap="round" stroke-linejoin="round"><circle cx="10" cy="10" r="6.500"/><path d="M15 15l6.500 6.500"/></svg>
<div class="b " style="left:2743px;top:1687.5px;width:220px;height:6px;background:#e2e2e2;border:1px solid #cfcfcf;border-radius:3px;"></div>
<div class="b " style="left:2757.5px;top:1670px;width:20.5px;height:41px;background:#dcdcdc;border:1.5px solid #b0b0b0;border-radius:2px;"></div>
<svg class="b" style="left:0;top:0" width="2996" height="1732"><g stroke="#1533f3" stroke-width="9.4" fill="none"><line x1="756" y1="287" x2="899" y2="152"/><line x1="756" y1="340" x2="898" y2="1646"/></g></svg>
<div class="b " style="left:192px;top:281px;width:569px;height:65px;border:10px solid #1533f3;"></div>
<div class="b " style="left:893px;top:147.7px;width:1996px;height:1500.7px;background:#fff;border:10px solid #1533f3;"></div>
<div class="b " style="left:1189px;top:158px;width:1.5px;height:5px;background:#bbb;"></div>
<div class="b " style="left:908px;top:163.5px;width:1965.5px;height:1470.5px;background:#f0f0f0;border:2px solid #6e6e6e;"></div>
<div class="b " style="left:910px;top:165.5px;width:1961.5px;height:60px;background:#fff;"></div>
<svg class="b" style="left:927px;top:180px;color:#000;" width="29" height="29" viewBox="0 0 24 24" fill="none" stroke="currentColor" stroke-width="2.4" stroke-linecap="round" stroke-linejoin="round"><path d="M4.500 10.500C4.500 6.500 7.500 4 11.500 4" stroke="#2b8fc9"/><circle cx="13.800" cy="3.800" r="1.700" fill="#2b6fb5" stroke="none"/><circle cx="3.200" cy="13.500" r="1.600" fill="#46aee6" stroke="none"/><circle cx="12" cy="12" r="1.800" fill="#46aee6" stroke="none"/><circle cx="20.800" cy="10.500" r="1.600" fill="#46aee6" stroke="none"/><path d="M19.500 13.500C19.500 17.500 16.500 20 12.500 20" stroke="#2b8fc9"/><path d="M14 16.800L10.800 20l3.400 2.600" stroke="#2b8fc9" stroke-width="2"/></svg>
<span class="t" style="letter-spacing:-0.592px;left:969px;top:183px;font-size:24px;color:#000;">Search Pattern Wizard</span>
<div class="b " style="left:2633.5px;top:193.4px;width:20.5px;height:2px;background:#111;"></div>
<div class="b " style="left:2723.5px;top:183.5px;width:20.2px;height:20px;border:2px solid #111;"></div>
<svg class="b" style="left:2813.5px;top:181.5px;color:#111;" width="24.5" height="24" viewBox="0 0 24 24" fill="none" stroke="currentColor" stroke-width="1.6" stroke-linecap="round" stroke-linejoin="round"><path d="M3 3l18 18M21 3L3 21"/></svg>
<span class="t" style="letter-spacing:-0.508px;left:924.5px;top:245px;font-size:24px;color:#222;">Name</span>
<div class="b " style="left:1044.5px;top:233.5px;width:1820.5px;height:43px;background:#fff;border:1.5px solid #ababab;"></div>
<span class="t" style="letter-spacing:-0.141px;left:1053px;top:245px;font-size:24px;color:#222;">Search for "Order-ID: " on the screen</span>
<span class="t" style="letter-spacing:-0.705px;left:924.5px;top:297px;font-size:24px;color:#222;">This Step:</span>
<span class="t" style="letter-spacing:-0.014px;left:1045px;top:297px;font-size:24px;color:#1a20f0;">Activity Workflow/Transaction/Search for "Order-ID: " on the screen</span>
<div class="b " style="left:2802px;top:282px;width:63px;height:51px;background:#e1e1e1;border:1.5px solid #adadad;border-radius:5px;"></div>
<svg class="b" style="left:2815.75px;top:289.45px;color:#111;" width="35.5" height="35.5" viewBox="0 0 24 24" fill="none" stroke="currentColor" stroke-width="1.6" stroke-linecap="round" stroke-linejoin="round"><circle cx="12" cy="12" r="10"/><text x="12" y="17.700" text-anchor="middle" font-size="16" font-family="Liberation Sans, sans-serif" fill="currentColor" stroke="none" font-weight="bold">?</text></svg>
<div class="b " style="left:915.5px;top:361px;width:1110.5px;height:1208px;border:1.5px solid #dcdcdc;border-radius:5px;"></div>
<div class="b " style="left:924px;top:345px;width:208px;height:30px;background:#f0f0f0;"></div>
<span class="t" style="letter-spacing:0.093px;left:930px;top:348.5px;font-size:27px;color:#444;-webkit-text-stroke-width:0.45px;">Search Patterns</span>
<div class="b " style="left:930px;top:391px;width:400px;height:47px;background:#fff;border:1.5px solid #d0d0d0;"></div>
<svg class="b" style="left:942px;top:402px;color:#222;" width="25" height="25" viewBox="0 0 24 24" fill="none" stroke="currentColor" stroke-width="3" stroke-linecap="round" stroke-linejoin="round"><circle cx="10" cy="10" r="6.500"/><path d="M15 15l6.500 6.500"/></svg>
<span class="t" style="letter-spacing:-0.606px;left:978.5px;top:404px;font-size:24px;color:#4a4ab8;font-style:italic;">Filter...</span>
<svg class="b" style="left:1920px;top:396px;color:#222;" width="34" height="34" viewBox="0 0 24 24" fill="none" stroke="currentColor" stroke-width="1.5" stroke-linecap="round" stroke-linejoin="round"><circle cx="10" cy="10" r="7.500"/><path d="M15.500 15.500l7 7M6.500 10h7"/></svg>
<svg class="b" style="left:1972px;top:396px;color:#222;" width="34" height="34" viewBox="0 0 24 24" fill="none" stroke="currentColor" stroke-width="1.5" stroke-linecap="round" stroke-linejoin="round"><circle cx="10" cy="10" r="7.500"/><path d="M15.500 15.500l7 7M6.500 10h7M10 6.500v7"/></svg>
<div class="b" style="left:930px;top:450px;width:1090px;height:1108px;overflow:hidden;background:#f0f0f0">
<div class="b" style="left:-930px;top:-450px;width:2996px;height:1732px">
<div class="b " style="left:930px;top:450px;width:1048px;height:440px;background:#f9f9f9;border:3px solid #b1d56c;"></div>
<div class="b " style="left:933px;top:453px;width:1042px;height:67px;background:#f1f1f3;"></div>
<div class="b " style="left:933px;top:520px;width:1042px;height:114px;background:#ececec;"></div>
<div class="b " style="left:933px;top:519px;width:1042px;height:2px;background:#d8d8d8;"></div>
<div class="b " style="left:933px;top:633px;width:1042px;height:2px;background:#d8d8d8;"></div>
<svg class="b" style="left:1932px;top:478px;color:#222;" width="24" height="18" viewBox="0 0 24 24" fill="none" stroke="currentColor" stroke-width="2.2" stroke-linecap="round" stroke-linejoin="round"><path d="M3 16l9-9 9 9"/></svg>
<svg class="b" style="left:944px;top:467.8px;color:#111;" width="36" height="36" viewBox="0 0 24 24" fill="none" stroke="currentColor" stroke-width="1.4" stroke-linecap="round" stroke-linejoin="round"><circle cx="12" cy="12" r="10"/><path d="M7 12.500l3.500 3.500 7-8" stroke-width="1.9"/></svg>
<span class="t" style="letter-spacing:-0.105px;left:986.5px;top:473px;font-size:28px;color:#111;-webkit-text-stroke-width:0.8px;">Regular:</span>
<div class="b " style="left:1099px;top:463px;width:438px;height:46px;background:linear-gradient(#ebebeb,#dcdcdc);border:1.5px solid #b8b8b8;border-radius:5px;"></div>
<span class="t" style="letter-spacing:0.425px;left:1107.5px;top:473px;font-size:28px;color:#111;-webkit-text-stroke:0.4px #111;">Match one or more patterns</span>
<svg class="b" style="left:1509px;top:478.5px;color:#222;" width="20" height="16" viewBox="0 0 24 24" fill="none" stroke="currentColor" stroke-width="2.9" stroke-linecap="round" stroke-linejoin="round"><path d="M3 8l9 9 9-9"/></svg>
<span class="t" style="letter-spacing:-1.333px;left:1549px;top:473.5px;font-size:27px;color:#111;">(1)</span>
<svg class="b" style="left:944px;top:532px;color:#111;" width="36" height="32" viewBox="0 0 24 24" fill="none" stroke="currentColor" stroke-width="1.5" stroke-linecap="round" stroke-linejoin="round"><path d="M2 6.500h4.500l2-3h7l2 3H22a.8.8 0 0 1 .8.8V20a.8.8 0 0 1-.8.8H2a.8.8 0 0 1-.8-.8V7.300a.8.8 0 0 1 .8-.8z"/><circle cx="12" cy="13.500" r="4.200"/></svg>
<span class="t" style="letter-spacing:0.373px;left:986.5px;top:538px;font-size:24px;color:#000;-webkit-text-stroke-width:0.86px;">Capture</span>
<svg class="b" style="left:1097px;top:531.5px;color:#111;" width="36" height="32" viewBox="0 0 24 24" fill="none" stroke="currentColor" stroke-width="1.45" stroke-linecap="round" stroke-linejoin="round"><rect x="1.500" y="3" width="21" height="17" rx="1.500"/><rect x="4.500" y="6" width="15" height="11"/><path d="M4.500 15l4.500-4.500 3.500 3.500 3-2.500 4 3.500"/><circle cx="7.500" cy="8.300" r="1.200"/></svg>
<span class="t" style="letter-spacing:0.871px;left:1140px;top:538px;font-size:24px;color:#000;-webkit-text-stroke-width:0.86px;">Add from Gallery</span>
<svg class="b" style="left:1357px;top:531px;color:#9a9a9a;" width="33" height="33" viewBox="0 0 24 24" fill="none" stroke="currentColor" stroke-width="1.6" stroke-linecap="round" stroke-linejoin="round"><g transform="rotate(-45 12 12)"><rect x="0.500" y="8" width="13" height="8" rx="4"/><rect x="10.500" y="8" width="13" height="8" rx="4"/></g></svg>
<span class="t" style="letter-spacing:0.609px;left:1398.5px;top:538px;font-size:24px;color:#8a8a8a;-webkit-text-stroke-width:0.86px;">Link Group</span>
<div class="b " style="left:1546.5px;top:533px;width:30px;height:30px;background:#f4f4f4;border:2px solid #9a9a9a;border-radius:4px;"></div>
<span class="t" style="letter-spacing:0.317px;left:1586.5px;top:538px;font-size:24px;color:#8a8a8a;-webkit-text-stroke-width:0.86px;">Clear selection</span>
<svg class="b" style="left:944.5px;top:587.5px;color:#8a8a8a;" width="34" height="34" viewBox="0 0 24 24" fill="none" stroke="currentColor" stroke-width="1.4" stroke-linecap="round" stroke-linejoin="round"><rect x="1.500" y="1.500" width="21" height="21" rx="2"/><path d="M6 12h12"/></svg>
<span class="t" style="letter-spacing:0.483px;left:987px;top:594px;font-size:24px;color:#8a8a8a;-webkit-text-stroke-width:0.86px;">Delete selection</span>
<div class="b " style="left:1182.5px;top:582px;width:136.5px;height:47px;background:#efefef;border:1.5px solid #d4d4d4;border-radius:5px;"></div>
<svg class="b" style="left:1187px;top:588.5px;color:#8a8a8a;" width="33" height="31" viewBox="0 0 24 24" fill="none" stroke="currentColor" stroke-width="1.5" stroke-linecap="round" stroke-linejoin="round"><path d="M2 6v14h15v-5"/><path d="M6 16c0-5 3-8 9-8V4l7 6.500-7 6.500v-4c-4 0-7 1-9 3z"/></svg>
<span class="t" style="letter-spacing:1.203px;left:1224px;top:594px;font-size:24px;color:#8a8a8a;-webkit-text-stroke-width:0.86px;">Move</span>
<svg class="b" style="left:1294px;top:598px;color:#9a9a9a;" width="16" height="12" viewBox="0 0 24 24" fill="none" stroke="currentColor" stroke-width="2.6" stroke-linecap="round" stroke-linejoin="round"><path d="M3 8l9 9 9-9"/></svg>
<div class="b " style="left:964px;top:665.5px;width:192px;height:191px;background:#fff;border:2.5px solid #1414f0;"></div>
<div class="b " style="left:982px;top:713px;width:156px;height:36px;background:#000;"></div>
<span class="t" style="letter-spacing:-0.960px;left:988px;top:716.5px;font-size:29px;color:#5dfc5d;font-weight:bold;font-family:'Liberation Mono',monospace;transform:scaleY(1.16);">Order-ID:</span>
<div class="b " style="left:982px;top:797.5px;width:156px;height:1.5px;background:#8a8a8a;"></div>
<span class="t" style="letter-spacing:-0.056px;left:995px;top:815px;font-size:24px;color:#111;">Pattern</span>
<svg class="b" style="left:1093px;top:810px;color:#111;" width="34" height="34" viewBox="0 0 24 24" fill="none" stroke="currentColor" stroke-width="1.6" stroke-linecap="round" stroke-linejoin="round"><path d="M3 21l1.500-5.500L17 3a2.100 2.100 0 0 1 3 0l1 1a2.100 2.100 0 0 1 0 3L8.500 19.500z"/><path d="M15 5l4 4M4.500 15.500l4 4"/></svg>
<div class="b " style="left:930px;top:900px;width:1048px;height:372px;background:#f9f9f9;border:3px solid #96b0ea;"></div>
<div class="b " style="left:933px;top:903px;width:1042px;height:66px;background:#f1f1f3;"></div>
<div class="b " style="left:933px;top:969px;width:1042px;height:114.5px;background:#ececec;"></div>
<div class="b " style="left:933px;top:968px;width:1042px;height:2px;background:#d8d8d8;"></div>
<div class="b " style="left:933px;top:1082.5px;width:1042px;height:2px;background:#d8d8d8;"></div>
<svg class="b" style="left:1932px;top:928px;color:#222;" width="24" height="18" viewBox="0 0 24 24" fill="none" stroke="currentColor" stroke-width="2.2" stroke-linecap="round" stroke-linejoin="round"><path d="M3 16l9-9 9 9"/></svg>
<svg class="b" style="left:944px;top:917px;color:#111;" width="36" height="36" viewBox="0 0 24 24" fill="none" stroke="currentColor" stroke-width="1.4" stroke-linecap="round" stroke-linejoin="round"><circle cx="12" cy="12" r="10"/><text x="12" y="17.3" text-anchor="middle" font-size="15" font-family="Liberation Sans, sans-serif" fill="currentColor" stroke="none" font-weight="bold">!</text></svg>
<span class="t" style="letter-spacing:0.349px;left:986.5px;top:923.5px;font-size:28px;color:#111;-webkit-text-stroke:0.4px #111;">Ignored: Ignore all matches within these patterns</span>
<span class="t" style="letter-spacing:0.000px;left:1619px;top:924px;font-size:27px;color:#111;">(0)</span>
<svg class="b" style="left:944px;top:982.5px;color:#111;" width="36" height="32" viewBox="0 0 24 24" fill="none" stroke="currentColor" stroke-width="1.5" stroke-linecap="round" stroke-linejoin="round"><path d="M2 6.500h4.500l2-3h7l2 3H22a.8.8 0 0 1 .8.8V20a.8.8 0 0 1-.8.8H2a.8.8 0 0 1-.8-.8V7.300a.8.8 0 0 1 .8-.8z"/><circle cx="12" cy="13.500" r="4.200"/></svg>
<span class="t" style="letter-spacing:0.373px;left:986.5px;top:988.5px;font-size:24px;color:#000;-webkit-text-stroke-width:0.86px;">Capture</span>
<svg class="b" style="left:1097px;top:982px;color:#111;" width="36" height="32" viewBox="0 0 24 24" fill="none" stroke="currentColor" stroke-width="1.45" stroke-linecap="round" stroke-linejoin="round"><rect x="1.500" y="3" width="21" height="17" rx="1.500"/><rect x="4.500" y="6" width="15" height="11"/><path d="M4.500 15l4.500-4.500 3.500 3.500 3-2.500 4 3.500"/><circle cx="7.500" cy="8.300" r="1.200"/></svg>
<span class="t" style="letter-spacing:0.871px;left:1140px;top:988.5px;font-size:24px;color:#000;-webkit-text-stroke-width:0.86px;">Add from Gallery</span>
<svg class="b" style="left:1357px;top:981.5px;color:#111;" width="33" height="33" viewBox="0 0 24 24" fill="none" stroke="currentColor" stroke-width="1.6" stroke-linecap="round" stroke-linejoin="round"><g transform="rotate(-45 12 12)"><rect x="0.500" y="8" width="13" height="8" rx="4"/><rect x="10.500" y="8" width="13" height="8" rx="4"/></g></svg>
<span class="t" style="letter-spacing:0.609px;left:1398.5px;top:988.5px;font-size:24px;color:#000;-webkit-text-stroke-width:0.86px;">Link Group</span>
<div class="b " style="left:1546.5px;top:983.5px;width:30px;height:30px;background:#f4f4f4;border:2px solid #9a9a9a;border-radius:4px;"></div>
<span class="t" style="letter-spacing:0.317px;left:1586.5px;top:988.5px;font-size:24px;color:#8a8a8a;-webkit-text-stroke-width:0.86px;">Clear selection</span>
<svg class="b" style="left:944.5px;top:1037.5px;color:#8a8a8a;" width="34" height="34" viewBox="0 0 24 24" fill="none" stroke="currentColor" stroke-width="1.4" stroke-linecap="round" stroke-linejoin="round"><rect x="1.500" y="1.500" width="21" height="21" rx="2"/><path d="M6 12h12"/></svg>
<span class="t" style="letter-spacing:0.483px;left:987px;top:1044px;font-size:24px;color:#8a8a8a;-webkit-text-stroke-width:0.86px;">Delete selection</span>
<div class="b " style="left:1182.5px;top:1032px;width:136.5px;height:47px;background:#efefef;border:1.5px solid #d4d4d4;border-radius:5px;"></div>
<svg class="b" style="left:1187px;top:1038.5px;color:#8a8a8a;" width="33" height="31" viewBox="0 0 24 24" fill="none" stroke="currentColor" stroke-width="1.5" stroke-linecap="round" stroke-linejoin="round"><path d="M2 6v14h15v-5"/><path d="M6 16c0-5 3-8 9-8V4l7 6.500-7 6.500v-4c-4 0-7 1-9 3z"/></svg>
<span class="t" style="letter-spacing:1.203px;left:1224px;top:1044px;font-size:24px;color:#8a8a8a;-webkit-text-stroke-width:0.86px;">Move</span>
<svg class="b" style="left:1294px;top:1048px;color:#9a9a9a;" width="16" height="12" viewBox="0 0 24 24" fill="none" stroke="currentColor" stroke-width="2.6" stroke-linecap="round" stroke-linejoin="round"><path d="M3 8l9 9 9-9"/></svg>
<span class="t" style="letter-spacing:0.379px;left:1150.5px;top:1166.5px;font-size:24px;color:#8c8c8c;">Click on 'Capture' or 'Add from Gallery' to add patterns.</span>
<div class="b " style="left:930px;top:1282px;width:1048px;height:372px;background:#f9f9f9;border:3px solid #ee7c4e;"></div>
<div class="b " style="left:933px;top:1285px;width:1042px;height:66px;background:#f1f1f3;"></div>
<div class="b " style="left:933px;top:1351px;width:1042px;height:114px;background:#ececec;"></div>
<div class="b " style="left:933px;top:1350px;width:1042px;height:2px;background:#d8d8d8;"></div>
<div class="b " style="left:933px;top:1464px;width:1042px;height:2px;background:#d8d8d8;"></div>
<svg class="b" style="left:1932px;top:1310px;color:#222;" width="24" height="18" viewBox="0 0 24 24" fill="none" stroke="currentColor" stroke-width="2.2" stroke-linecap="round" stroke-linejoin="round"><path d="M3 16l9-9 9 9"/></svg>
<svg class="b" style="left:944px;top:1298.5px;color:#111;" width="36" height="36" viewBox="0 0 24 24" fill="none" stroke="currentColor" stroke-width="1.4" stroke-linecap="round" stroke-linejoin="round"><circle cx="12" cy="12" r="10"/><path d="M8.500 8.500l7 7M15.500 8.500l-7 7" stroke-width="1.9"/></svg>
<span class="t" style="letter-spacing:0.105px;left:986.5px;top:1305px;font-size:28px;color:#111;-webkit-text-stroke:0.4px #111;">Excluded: Make sure none of these patterns appear</span>
<span class="t" style="letter-spacing:0.000px;left:1645.5px;top:1305.5px;font-size:27px;color:#111;">(0)</span>
<svg class="b" style="left:944px;top:1364.5px;color:#111;" width="36" height="32" viewBox="0 0 24 24" fill="none" stroke="currentColor" stroke-width="1.5" stroke-linecap="round" stroke-linejoin="round"><path d="M2 6.500h4.500l2-3h7l2 3H22a.8.8 0 0 1 .8.8V20a.8.8 0 0 1-.8.8H2a.8.8 0 0 1-.8-.8V7.300a.8.8 0 0 1 .8-.8z"/><circle cx="12" cy="13.500" r="4.200"/></svg>
<span class="t" style="letter-spacing:0.373px;left:986.5px;top:1370.5px;font-size:24px;color:#000;-webkit-text-stroke-width:0.86px;">Capture</span>
<svg class="b" style="left:1097px;top:1364px;color:#111;" width="36" height="32" viewBox="0 0 24 24" fill="none" stroke="currentColor" stroke-width="1.45" stroke-linecap="round" stroke-linejoin="round"><rect x="1.500" y="3" width="21" height="17" rx="1.500"/><rect x="4.500" y="6" width="15" height="11"/><path d="M4.500 15l4.500-4.500 3.500 3.500 3-2.500 4 3.500"/><circle cx="7.500" cy="8.300" r="1.200"/></svg>
<span class="t" style="letter-spacing:0.871px;left:1140px;top:1370.5px;font-size:24px;color:#000;-webkit-text-stroke-width:0.86px;">Add from Gallery</span>
<svg class="b" style="left:1357px;top:1363.5px;color:#111;" width="33" height="33" viewBox="0 0 24 24" fill="none" stroke="currentColor" stroke-width="1.6" stroke-linecap="round" stroke-linejoin="round"><g transform="rotate(-45 12 12)"><rect x="0.500" y="8" width="13" height="8" rx="4"/><rect x="10.500" y="8" width="13" height="8" rx="4"/></g></svg>
<span class="t" style="letter-spacing:0.609px;left:1398.5px;top:1370.5px;font-size:24px;color:#000;-webkit-text-stroke-width:0.86px;">Link Group</span>
<div class="b " style="left:1546.5px;top:1365.5px;width:30px;height:30px;background:#f4f4f4;border:2px solid #9a9a9a;border-radius:4px;"></div>
<span class="t" style="letter-spacing:0.317px;left:1586.5px;top:1370.5px;font-size:24px;color:#8a8a8a;-webkit-text-stroke-width:0.86px;">Clear selection</span>
<svg class="b" style="left:944.5px;top:1419.5px;color:#8a8a8a;" width="34" height="34" viewBox="0 0 24 24" fill="none" stroke="currentColor" stroke-width="1.4" stroke-linecap="round" stroke-linejoin="round"><rect x="1.500" y="1.500" width="21" height="21" rx="2"/><path d="M6 12h12"/></svg>
<span class="t" style="letter-spacing:0.483px;left:987px;top:1426px;font-size:24px;color:#8a8a8a;-webkit-text-stroke-width:0.86px;">Delete selection</span>
<div class="b " style="left:1182.5px;top:1414px;width:136.5px;height:47px;background:#efefef;border:1.5px solid #d4d4d4;border-radius:5px;"></div>
<svg class="b" style="left:1187px;top:1420.5px;color:#8a8a8a;" width="33" height="31" viewBox="0 0 24 24" fill="none" stroke="currentColor" stroke-width="1.5" stroke-linecap="round" stroke-linejoin="round"><path d="M2 6v14h15v-5"/><path d="M6 16c0-5 3-8 9-8V4l7 6.500-7 6.500v-4c-4 0-7 1-9 3z"/></svg>
<span class="t" style="letter-spacing:1.203px;left:1224px;top:1426px;font-size:24px;color:#8a8a8a;-webkit-text-stroke-width:0.86px;">Move</span>
<svg class="b" style="left:1294px;top:1430px;color:#9a9a9a;" width="16" height="12" viewBox="0 0 24 24" fill="none" stroke="currentColor" stroke-width="2.6" stroke-linecap="round" stroke-linejoin="round"><path d="M3 8l9 9 9-9"/></svg>
<span class="t" style="letter-spacing:0.379px;left:1150.5px;top:1548.5px;font-size:24px;color:#8c8c8c;">Click on 'Capture' or 'Add from Gallery' to add patterns.</span>
<div class="b " style="left:1982px;top:450px;width:34px;height:1108px;background:#f8f8f8;"></div>
<svg class="b" style="left:1987.5px;top:453.5px;color:#666;" width="22" height="15" viewBox="0 0 24 24" fill="none" stroke="currentColor" stroke-width="2" stroke-linecap="round" stroke-linejoin="round"><path d="M3 16l9-9 9 9"/></svg>
<svg class="b" style="left:1987.5px;top:1533.5px;color:#666;" width="22" height="15" viewBox="0 0 24 24" fill="none" stroke="currentColor" stroke-width="2" stroke-linecap="round" stroke-linejoin="round"><path d="M3 8l9 9 9-9"/></svg>
<div class="b " style="left:1993.5px;top:479px;width:10px;height:958px;background:#cbcbcb;border-radius:5px;"></div>
</div></div>
<span class="t" style="letter-spacing:-0.161px;left:917px;top:1592.5px;font-size:24px;color:#222;">Error handling:</span>
<div class="b " style="left:1085px;top:1581.5px;width:398px;height:45px;background:linear-gradient(#ebebeb,#dcdcdc);border:1.5px solid #b0b0b0;border-radius:5px;"></div>
<span class="t" style="letter-spacing:0.109px;left:1093px;top:1592.5px;font-size:24px;color:#222;">Normal</span>
<svg class="b" style="left:1455px;top:1597.5px;color:#222;" width="19" height="15" viewBox="0 0 24 24" fill="none" stroke="currentColor" stroke-width="2.9" stroke-linecap="round" stroke-linejoin="round"><path d="M3 8l9 9 9-9"/></svg>
<div class="b " style="left:2480px;top:1579.5px;width:119.5px;height:48.5px;background:#e3e3e3;border:1.5px solid #b5b5b5;border-radius:5px;"></div>
<span class="t" style="letter-spacing:-0.754px;left:2519.25px;top:1592px;font-size:24px;color:#222;">Test</span>
<div class="b " style="left:2614px;top:1579.5px;width:119px;height:48.5px;background:#e3e3e3;border:1.5px solid #b5b5b5;border-radius:5px;"></div>
<span class="t" style="letter-spacing:-1.094px;left:2657.25px;top:1592px;font-size:24px;color:#222;">OK</span>
<div class="b " style="left:2748px;top:1579.5px;width:119px;height:48.5px;background:#e3e3e3;border:1.5px solid #b5b5b5;border-radius:5px;"></div>
<span class="t" style="letter-spacing:-0.620px;left:2772px;top:1592px;font-size:24px;color:#222;">Cancel</span>
<div class="b " style="left:2037px;top:361px;width:830px;height:1208px;border:1.5px solid #dcdcdc;border-radius:5px;"></div>
<div class="b " style="left:2045px;top:345px;width:208px;height:30px;background:#f0f0f0;"></div>
<span class="t" style="letter-spacing:0.293px;left:2051px;top:348.5px;font-size:27px;color:#444;-webkit-text-stroke-width:0.45px;">Search Settings</span>
<span class="t" style="letter-spacing:-0.198px;left:2057.5px;top:401px;font-size:24px;color:#333;">Required matching precision (%):</span>
<div class="b " style="left:2426px;top:392px;width:99.5px;height:43px;background:#fff;border:1.5px solid #c8c8c8;"></div>
<span class="t" style="letter-spacing:0.148px;left:2435px;top:401.5px;font-size:24px;color:#111;">95</span>
<div class="b " style="left:2727px;top:450px;width:74px;height:22px;background:#f3f47c;"></div>
<div class="b " style="left:2801px;top:450px;width:39px;height:22px;background:#7fe87f;"></div>
<div class="b " style="left:2062.1px;top:453px;width:1.3px;height:6.5px;background:#777;"></div>
<div class="b " style="left:2101.4px;top:453px;width:1.3px;height:6.5px;background:#777;"></div>
<div class="b " style="left:2140.7px;top:453px;width:1.3px;height:6.5px;background:#777;"></div>
<div class="b " style="left:2180px;top:453px;width:1.3px;height:6.5px;background:#777;"></div>
<div class="b " style="left:2219.3px;top:453px;width:1.3px;height:6.5px;background:#777;"></div>
<div class="b " style="left:2258.6px;top:453px;width:1.3px;height:6.5px;background:#777;"></div>
<div class="b " style="left:2297.9px;top:453px;width:1.3px;height:6.5px;background:#777;"></div>
<div class="b " style="left:2337.2px;top:453px;width:1.3px;height:6.5px;background:#777;"></div>
<div class="b " style="left:2376.5px;top:453px;width:1.3px;height:6.5px;background:#777;"></div>
<div class="b " style="left:2415.8px;top:453px;width:1.3px;height:6.5px;background:#777;"></div>
<div class="b " style="left:2455.1px;top:453px;width:1.3px;height:6.5px;background:#777;"></div>
<div class="b " style="left:2494.4px;top:453px;width:1.3px;height:6.5px;background:#777;"></div>
<div class="b " style="left:2533.7px;top:453px;width:1.3px;height:6.5px;background:#777;"></div>
<div class="b " style="left:2573px;top:453px;width:1.3px;height:6.5px;background:#777;"></div>
<div class="b " style="left:2612.3px;top:453px;width:1.3px;height:6.5px;background:#777;"></div>
<div class="b " style="left:2651.6px;top:453px;width:1.3px;height:6.5px;background:#777;"></div>
<div class="b " style="left:2690.9px;top:453px;width:1.3px;height:6.5px;background:#777;"></div>
<div class="b " style="left:2730.2px;top:453px;width:1.3px;height:6.5px;background:#777;"></div>
<div class="b " style="left:2769.5px;top:453px;width:1.3px;height:6.5px;background:#777;"></div>
<div class="b " style="left:2808.8px;top:453px;width:1.3px;height:6.5px;background:#777;"></div>
<div class="b " style="left:2839.4px;top:453px;width:1.3px;height:6.5px;background:#777;"></div>
<div class="b " style="left:2063.5px;top:476.5px;width:777px;height:6px;background:#dedede;border:1px solid #c6c6c6;border-radius:3px;"></div>
<svg class="b" style="left:2788.500px;top:458px" width="22" height="38" viewBox="0 0 22 38"><path d="M2 12L11 2l9 10v22a2 2 0 0 1-2 2H4a2 2 0 0 1-2-2z" fill="#e2e2e5" stroke="#a8a8a8" stroke-width="1.5"/></svg>
<div class="b " style="left:2058px;top:522px;width:27.5px;height:27.5px;background:#fff;border:1.5px solid #b0b0b0;border-radius:4px;"></div>
<svg class="b" style="left:2061px;top:525px;color:#111;" width="22" height="22" viewBox="0 0 24 24" fill="none" stroke="currentColor" stroke-width="3" stroke-linecap="round" stroke-linejoin="round"><path d="M4 12.500l5.500 5.500L20 6"/></svg>
<span class="t" style="letter-spacing:-0.015px;left:2097px;top:524.5px;font-size:24px;color:#222;">Use general timeout</span>
<span class="t" style="letter-spacing:-0.131px;left:2343px;top:524.5px;font-size:24px;color:#8a8a8a;">Timeout [sec]:</span>
<div class="b " style="left:2520px;top:515.5px;width:99.5px;height:41px;background:#f0f0f0;border:1.5px solid #c8c8c8;"></div>
<span class="t" style="letter-spacing:0.148px;left:2530px;top:524.5px;font-size:24px;color:#8a8a8a;">45</span>
<div class="b " style="left:2058px;top:590px;width:27.5px;height:27.5px;background:#fff;border:1.5px solid #b0b0b0;border-radius:4px;"></div>
<span class="t" style="letter-spacing:-0.129px;left:2097px;top:592.5px;font-size:24px;color:#222;">Check whether found match stays on same location every</span>
<div class="b " style="left:2728px;top:582px;width:99.5px;height:43px;background:#f0f0f0;border:1.5px solid #c8c8c8;"></div>
<span class="t" style="letter-spacing:-0.016px;left:2738px;top:592.5px;font-size:24px;color:#8a8a8a;">500</span>
<span class="t" style="letter-spacing:1.000px;left:2846px;top:592.5px;font-size:24px;color:#333;">r</span>
<div class="b " style="left:2058px;top:654px;width:27.5px;height:27.5px;background:#fff;border:1.5px solid #b0b0b0;border-radius:4px;"></div>
<span class="t" style="letter-spacing:0.153px;left:2097px;top:656px;font-size:24px;color:#222;">Allow multiple matches of a found pattern.</span>
<div class="b " style="left:2058px;top:718.5px;width:27.5px;height:27.5px;background:#fff;border:1.5px solid #b0b0b0;border-radius:4px;"></div>
<span class="t" style="letter-spacing:-0.135px;left:2097px;top:720.5px;font-size:24px;color:#222;">Move mouse to 0,0 while pattern search is active.</span>
<div class="b " style="left:2052.5px;top:796px;width:799px;height:757.5px;border:1.5px solid #dcdcdc;border-radius:6px;"></div>
<div class="b " style="left:2068px;top:780px;width:160px;height:30px;background:#f0f0f0;"></div>
<span class="t" style="letter-spacing:-0.327px;left:2076px;top:782.5px;font-size:25px;color:#222;-webkit-text-stroke:0.6px #222;">Search Area</span>
<svg class="b" style="left:2070px;top:829px;color:#333;" width="35" height="35" viewBox="0 0 24 24" fill="none" stroke="currentColor" stroke-width="1.4" stroke-linecap="round" stroke-linejoin="round"><path d="M6 1v17h17M1 6h17v17" stroke-width="2.4"/><path d="M6 18L19 5M19 5l-3 0M19 5v3"/><path d="M2 2l2 2M3 1v4M1 3h4M18 19v4M16 21h4"/></svg>
<span class="t" style="letter-spacing:-0.173px;left:2112px;top:834.5px;font-size:24px;color:#222;">Define manually</span>
<svg class="b" style="left:2297px;top:829px;color:#111;" width="34" height="34" viewBox="0 0 24 24" fill="none" stroke="currentColor" stroke-width="1.5" stroke-linecap="round" stroke-linejoin="round"><path d="M2.500 19L15.500 6l3 3L5.500 22z"/><path d="M12.800 8.700l3 3"/><path d="M5.500 1.500v4.500M3.250 3.750h4.500M20.500 13v4.500M18.250 15.250h4.500M10.500 2v1.200M21 8.500v1.200"/></svg>
<span class="t" style="letter-spacing:-0.005px;left:2338px;top:834.5px;font-size:24px;color:#222;">Define automatically</span>
<svg class="b" style="left:2570px;top:829px;color:#111;" width="34" height="34" viewBox="0 0 24 24" fill="none" stroke="currentColor" stroke-width="3" stroke-linecap="round" stroke-linejoin="round"><path d="M3 3l18 18M21 3L3 21"/></svg>
<span class="t" style="letter-spacing:-0.330px;left:2611px;top:834.5px;font-size:24px;color:#222;">Reset to fullscreen</span>
<div class="b " style="left:2132px;top:938px;width:639px;height:400px;background:#9f9f9f;border:2px solid #2b2b2b;"></div>
<div class="b " style="left:2134px;top:940px;width:635px;height:6px;background:#d0d0d0;"></div>
<div class="b " style="left:2134px;top:1322.5px;width:635px;height:13.5px;background:#b2b2b2;"></div>
<div class="b " style="left:2161.5px;top:976px;width:253.5px;height:162.5px;background:#000;border:2px solid #2222ee;"></div>
<span class="t" style="letter-spacing:0.456px;left:2197px;top:988.5px;font-size:9px;color:#56e356;font-weight:bold;font-family:'Liberation Mono',monospace;">ORDER TRACKING SCREEN</span>
<div class="b " style="left:2190px;top:1022.5px;width:222px;height:1.2px;background:#8fb88f;"></div>
<div class="b " style="left:2414px;top:1022.5px;width:300px;height:1.2px;background:#a9b5a4;"></div>
<span class="t" style="letter-spacing:-0.358px;left:2189px;top:1045.5px;font-size:8px;color:#56e356;font-weight:bold;font-family:'Liberation Mono',monospace;">Order-ID:</span>
<div class="b " style="left:2236px;top:1037px;width:109px;height:25px;background:#000;border:1px solid #1f3556;"></div>
<div class="b " style="left:2352px;top:1040.5px;width:31px;height:18px;background:#f2f2f2;"></div>
<span class="t" style="letter-spacing:-0.036px;left:2355px;top:1046px;font-size:7px;color:#222;font-family:'Liberation Mono',monospace;">Search</span>
<div class="b " style="left:2390px;top:1040.5px;width:24px;height:18px;background:#f2f2f2;"></div>
<span class="t" style="letter-spacing:-0.203px;left:2393px;top:1046px;font-size:7px;color:#222;font-family:'Liberation Mono',monospace;">Clear</span>
<div class="b " style="left:2414px;top:1040.5px;width:35px;height:18px;background:#c8c8c8;"></div>
<span class="t" style="letter-spacing:0.130px;left:2419px;top:1046px;font-size:7px;color:#e8e8e8;font-family:'Liberation Mono',monospace;">Search</span>
<span class="t" style="letter-spacing:-0.426px;left:2197px;top:1104px;font-size:8px;color:#56e356;font-weight:bold;font-family:'Liberation Mono',monospace;">Order ID</span>
<span class="t" style="letter-spacing:-0.347px;left:2259px;top:1104px;font-size:8px;color:#56e356;font-weight:bold;font-family:'Liberation Mono',monospace;">Customer ID</span>
<span class="t" style="letter-spacing:-0.384px;left:2336px;top:1104px;font-size:8px;color:#56e356;font-weight:bold;font-family:'Liberation Mono',monospace;">Tracking No.</span>
<span class="t" style="letter-spacing:-0.403px;left:2197px;top:1129px;font-size:8px;color:#56e356;font-family:'Liberation Mono',monospace;">67915</span>
<span class="t" style="letter-spacing:-0.551px;left:2260px;top:1129px;font-size:8px;color:#56e356;font-family:'Liberation Mono',monospace;">1137</span>
<span class="t" style="letter-spacing:0.309px;left:2336px;top:1129px;font-size:8px;color:#56e356;font-family:'Liberation Mono',monospace;">311485169</span>
<span class="t" style="letter-spacing:-0.403px;left:2197px;top:1154.6px;font-size:8px;color:#b4d8ae;font-family:'Liberation Mono',monospace;">67916</span>
<span class="t" style="letter-spacing:-0.551px;left:2260px;top:1154.6px;font-size:8px;color:#b4d8ae;font-family:'Liberation Mono',monospace;">1138</span>
<span class="t" style="letter-spacing:0.309px;left:2336px;top:1154.6px;font-size:8px;color:#b4d8ae;font-family:'Liberation Mono',monospace;">311513175</span>
<span class="t" style="letter-spacing:-0.403px;left:2197px;top:1180.2px;font-size:8px;color:#b4d8ae;font-family:'Liberation Mono',monospace;">67917</span>
<span class="t" style="letter-spacing:-0.551px;left:2260px;top:1180.2px;font-size:8px;color:#b4d8ae;font-family:'Liberation Mono',monospace;">1139</span>
<span class="t" style="letter-spacing:0.309px;left:2336px;top:1180.2px;font-size:8px;color:#b4d8ae;font-family:'Liberation Mono',monospace;">317597519</span>
<span class="t" style="letter-spacing:-0.403px;left:2197px;top:1205.8px;font-size:8px;color:#b4d8ae;font-family:'Liberation Mono',monospace;">67918</span>
<span class="t" style="letter-spacing:-0.551px;left:2260px;top:1205.8px;font-size:8px;color:#b4d8ae;font-family:'Liberation Mono',monospace;">1158</span>
<span class="t" style="letter-spacing:0.309px;left:2336px;top:1205.8px;font-size:8px;color:#b4d8ae;font-family:'Liberation Mono',monospace;">315820501</span>
<span class="t" style="letter-spacing:-0.403px;left:2197px;top:1231.4px;font-size:8px;color:#b4d8ae;font-family:'Liberation Mono',monospace;">67919</span>
<span class="t" style="letter-spacing:0.865px;left:2260px;top:1231.4px;font-size:8px;color:#b4d8ae;font-family:'Liberation Mono',monospace;">177</span>
<span class="t" style="letter-spacing:0.309px;left:2336px;top:1231.4px;font-size:8px;color:#b4d8ae;font-family:'Liberation Mono',monospace;">312317706</span>
<div class="b " style="left:2190px;top:1249.5px;width:524px;height:1.2px;background:#a6b8a2;"></div>
<span class="t" style="letter-spacing:-0.301px;left:2367px;top:1263.5px;font-size:8px;color:#a4dca0;font-family:'Liberation Mono',monospace;">&lt; page down, &gt; page up, or ESC to exit</span>
<div class="b " style="left:2382px;top:1306px;width:140px;height:12px;background:#a9a9a9;border-radius:6px;"></div>
<div class="b " style="left:2303px;top:1326px;width:6px;height:6px;background:#5f9fd8;border-radius:3px;opacity:.7;"></div>
<div class="b " style="left:2322px;top:1326px;width:6px;height:6px;background:#d8b060;border-radius:3px;opacity:.7;"></div>
<div class="b " style="left:2340px;top:1326px;width:6px;height:6px;background:#e0a050;border-radius:3px;opacity:.7;"></div>
<div class="b " style="left:2358px;top:1326px;width:6px;height:6px;background:#6f9fe0;border-radius:3px;opacity:.7;"></div>
<div class="b " style="left:2373px;top:1326px;width:6px;height:6px;background:#70b8c8;border-radius:3px;opacity:.7;"></div>
<div class="b " style="left:2142px;top:1325px;width:5px;height:6px;background:#777;"></div>
<div class="b " style="left:2156px;top:1328px;width:40px;height:1.5px;background:#8c8c8c;"></div>
<div class="b " style="left:2690px;top:1326px;width:60px;height:5px;background:#9c9c9c;opacity:.6;"></div>
<div class="b " style="left:2141px;top:954px;width:46px;height:1.5px;background:#c0c0c0;"></div>
<span class="t" style="letter-spacing:-0.292px;left:2073px;top:1422.5px;font-size:24px;color:#333;">The search area is currently set to:</span>
<span class="t" style="letter-spacing:-0.414px;left:2073px;top:1454.5px;font-size:24px;color:#333;">Fixed position 76;97, size: 688x441.</span>
<span class="t" style="letter-spacing:-0.482px;left:2073px;top:1506px;font-size:24px;color:#222;">Relative To</span>
<div class="b " style="left:2226.5px;top:1495px;width:612.5px;height:43px;background:linear-gradient(#ebebeb,#dddddd);border:1.5px solid #b0b0b0;border-radius:5px;"></div>
<span class="t" style="letter-spacing:0.268px;left:2243.5px;top:1505.5px;font-size:25px;color:#111;-webkit-text-stroke-width:0.90px;">&lt; None &gt;</span>
<svg class="b" style="left:2805.500px;top:1512px" width="17" height="10" viewBox="0 0 17 10"><path d="M0 0h17L8.500 10z" fill="#111"/></svg>
<div class="b " style="left:920.5px;top:447px;width:682.5px;height:76.5px;border:9.6px solid #1533f3;"></div>
<div class="b " style="left:920.5px;top:514px;width:173.5px;height:72px;border:9.6px solid #1533f3;"></div>
</body></html>
